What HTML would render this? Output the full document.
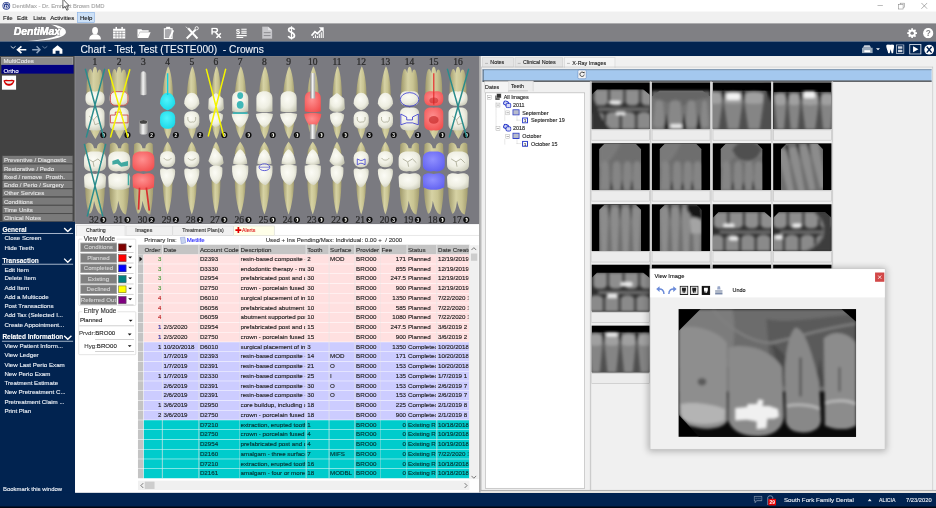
<!DOCTYPE html>
<html><head><meta charset="utf-8">
<style>
html,body{margin:0;padding:0;width:936px;height:508px;overflow:hidden;background:#fff}
#root{position:absolute;left:0;top:0;width:1920px;height:1042px;transform:scale(0.4875);transform-origin:0 0;font-family:"Liberation Sans",sans-serif;font-size:12px;overflow:hidden;background:#f0f0f0}
.a{position:absolute}
.t{position:absolute;white-space:pre;line-height:1;-webkit-text-stroke:0.25px currentColor}
</style></head><body><div id="root">


<svg width="0" height="0" style="position:absolute"><defs>
<filter id="bl" x="-5%" y="-5%" width="110%" height="110%"><feGaussianBlur stdDeviation="3"/></filter>
<filter id="blb" x="-5%" y="-5%" width="110%" height="110%"><feGaussianBlur stdDeviation="3.5"/></filter>
<symbol id="xr00" viewBox="0 0 120 96">
<clipPath id="cxr00"><path d="M12 14H106L120 26V96H0V26Z"/></clipPath>
<g clip-path="url(#cxr00)"><rect x="0" y="0" width="120" height="96" fill="#2e2e2e"/><g filter="url(#bl)">
<path d="M6 14H34V40C32 50 8 50 6 40Z" fill="#8e8e8e"/>
<path d="M38 14H66V40C64 50 40 50 38 40Z" fill="#8e8e8e"/>
<path d="M70 14H98V40C96 50 72 50 70 40Z" fill="#8e8e8e"/>
<path d="M102 14H130V40C128 50 104 50 102 40Z" fill="#8e8e8e"/>
<rect x="14" y="52" width="106" height="6" fill="#767676"/>
<path d="M-2 68C0 58 24 58 26 68V96H-2Z" fill="#8a8a8a"/>
<path d="M30 68C32 58 56 58 58 68V96H30Z" fill="#8a8a8a"/>
<path d="M62 68C64 58 88 58 90 68V96H62Z" fill="#8a8a8a"/>
<path d="M94 68C96 58 120 58 122 68V96H94Z" fill="#8a8a8a"/>
<rect x="36" y="38" width="24" height="7" rx="3" fill="#f0f0f0"/>
<rect x="50" y="60" width="20" height="7" rx="3" fill="#f0f0f0"/>
<path d="M0 26C14 40 12 70 40 96H0Z" fill="#303030"/>
</g></g>
</symbol>
<symbol id="xr01" viewBox="0 0 120 96">
<path d="M16 17H104L120 29V96H0V29Z" fill="#737373"/><g filter="url(#bl)">
<path d="M0 31C30 37 40 47 56 51C70 45 90 33 120 31V17H0Z" fill="#666"/>
<path d="M7 41C11 35 19 35 23 41L27 88C21 95 9 95 3 88Z" fill="#888"/>
<path d="M37 41C41 35 55 35 59 41L63 88C57 95 39 95 33 88Z" fill="#888"/>
<path d="M73 41C77 35 85 35 89 41L93 88C87 95 75 95 69 88Z" fill="#888"/>
<path d="M103 41C107 35 109 35 113 41L117 88C111 95 105 95 99 88Z" fill="#888"/>
<path d="M25 96L30 62L35 96Z" fill="#121212"/>
<path d="M61 96L66 62L71 96Z" fill="#121212"/>
<path d="M91 96L96 62L101 96Z" fill="#121212"/>
<rect x="38" y="86" width="24" height="8" rx="2" fill="#eee"/>
</g>
</symbol>
<symbol id="xr02" viewBox="0 0 120 96">
<rect x="0" y="17" width="120" height="79" fill="#4e4e4e"/><g filter="url(#bl)">
<path d="M-20 25C-20 17 21 17 21 25L20 43L12.0 96H-11.0L-19 43Z" fill="#858585"/>
<path d="M-19 25C-19 18 20 18 20 25L19 41C8.7 45 -7.700000000000001 45 -18 41Z" fill="#a0a0a0"/>
<path d="M22 25C22 17 62 17 62 25L61 43L53.2 96H30.8L23 43Z" fill="#858585"/>
<path d="M23 25C23 18 61 18 61 25L60 41C50.0 45 34.0 45 24 41Z" fill="#a0a0a0"/>
<path d="M64 25C64 17 105 17 105 25L104 43L96.0 96H73.0L65 43Z" fill="#858585"/>
<path d="M65 25C65 18 104 18 104 25L103 41C92.7 45 76.3 45 66 41Z" fill="#a0a0a0"/>
<path d="M16.5 17H26.5L21.5 47Z" fill="#141414"/>
<path d="M58.0 17H68.0L63.0 47Z" fill="#141414"/>
<rect x="28" y="22" width="28" height="14" rx="3" fill="#f2f2f2"/>
<path d="M104 0H120V42Z" fill="#000"/>
</g>
</symbol>
<symbol id="xr03" viewBox="0 0 120 96">
<rect x="0" y="20" width="120" height="76" fill="#4e4e4e"/><g filter="url(#bl)">
<path d="M2 28C2 20 28 20 28 28L27 46L22.3 96H7.7L3 46Z" fill="#858585"/>
<path d="M3 28C3 21 27 21 27 28L26 44C20.2 48 9.8 48 4 44Z" fill="#a0a0a0"/>
<path d="M30 28C30 20 56 20 56 28L55 46L50.3 96H35.7L31 46Z" fill="#858585"/>
<path d="M31 28C31 21 55 21 55 28L54 44C48.2 48 37.8 48 32 44Z" fill="#a0a0a0"/>
<path d="M58 28C58 20 94 20 94 28L93 46L86.1 96H65.9L59 46Z" fill="#858585"/>
<path d="M59 28C59 21 93 21 93 28L92 44C83.2 48 68.8 48 60 44Z" fill="#a0a0a0"/>
<path d="M96 28C96 20 124 20 124 28L123 46L117.8 96H102.2L97 46Z" fill="#858585"/>
<path d="M97 28C97 21 123 21 123 28L122 44C115.6 48 104.4 48 98 44Z" fill="#a0a0a0"/>
<path d="M24.0 20H34.0L29.0 50Z" fill="#141414"/>
<path d="M52.0 20H62.0L57.0 50Z" fill="#141414"/>
<path d="M90.0 20H100.0L95.0 50Z" fill="#141414"/>
<rect x="62" y="18" width="24" height="14" rx="3" fill="#f2f2f2"/>
</g>
</symbol>
<symbol id="xr10" viewBox="0 0 120 96">
<clipPath id="cxr10"><path d="M28 0H90L102 12V96H16V12Z"/></clipPath><g clip-path="url(#cxr10)"><rect x="0" y="0" width="120" height="96" fill="#6e6e6e"/><g filter="url(#bl)">
<path d="M16 0H60C50 20 40 40 16 50Z" fill="#7a7a7a"/>
<path d="M18 96L20 44C24 34 32 34 36 44L38 96Z" fill="#858585"/>
<path d="M42 96L44 44C48 34 56 34 60 44L62 96Z" fill="#858585"/>
<path d="M64 96L66 44C70 34 78 34 82 44L84 96Z" fill="#858585"/>
<path d="M84 96L86 44C90 34 98 34 102 44L104 96Z" fill="#858585"/>
<path d="M38 96L41 74L44 96Z" fill="#0e0e0e"/>
<path d="M60 96L63 74L66 96Z" fill="#0e0e0e"/>
<path d="M80 96L83 74L86 96Z" fill="#0e0e0e"/>
</g></g>
</symbol>
<symbol id="xr11" viewBox="0 0 120 96">
<clipPath id="cxr11"><path d="M28 0H90L102 12V96H16V12Z"/></clipPath><g clip-path="url(#cxr11)"><rect x="0" y="0" width="120" height="96" fill="#6e6e6e"/><g filter="url(#bl)">
<path d="M16 0H60C50 20 40 40 16 50Z" fill="#7a7a7a"/>
<path d="M18 96L20 44C24 34 32 34 36 44L38 96Z" fill="#858585"/>
<path d="M42 96L44 44C48 34 56 34 60 44L62 96Z" fill="#858585"/>
<path d="M64 96L66 44C70 34 78 34 82 44L84 96Z" fill="#858585"/>
<path d="M84 96L86 44C90 34 98 34 102 44L104 96Z" fill="#858585"/>
<path d="M38 96L41 74L44 96Z" fill="#0e0e0e"/>
<path d="M60 96L63 74L66 96Z" fill="#0e0e0e"/>
<path d="M80 96L83 74L86 96Z" fill="#0e0e0e"/>
</g></g>
</symbol>
<symbol id="xr12" viewBox="0 0 120 96">
<clipPath id="cxr12"><path d="M28 0H90L102 12V96H16V12Z"/></clipPath><g clip-path="url(#cxr12)"><rect x="0" y="0" width="120" height="96" fill="#6e6e6e"/><g filter="url(#bl)">
<path d="M16 0H60C50 20 40 40 16 50Z" fill="#7a7a7a"/>
<ellipse cx="70" cy="18" rx="30" ry="22" fill="#505050"/><path d="M40 18C50 45 90 45 100 18" stroke="#8a8a8a" stroke-width="3" fill="none"/>
<path d="M18 96L20 44C24 34 32 34 36 44L38 96Z" fill="#858585"/>
<path d="M42 96L44 44C48 34 56 34 60 44L62 96Z" fill="#858585"/>
<path d="M64 96L66 44C70 34 78 34 82 44L84 96Z" fill="#858585"/>
<path d="M84 96L86 44C90 34 98 34 102 44L104 96Z" fill="#858585"/>
<path d="M38 96L41 74L44 96Z" fill="#0e0e0e"/>
<path d="M60 96L63 74L66 96Z" fill="#0e0e0e"/>
<path d="M80 96L83 74L86 96Z" fill="#0e0e0e"/>
</g></g>
</symbol>
<symbol id="xr13" viewBox="0 0 120 96">
<clipPath id="cxr13"><path d="M28 0H90L102 12V96H16V12Z"/></clipPath><g clip-path="url(#cxr13)"><rect x="0" y="0" width="120" height="96" fill="#6e6e6e"/><g filter="url(#bl)">
<g transform="rotate(-12 58 48)">
<path d="M16 12C16 2 36 2 36 12L32 100H20Z" fill="#8c8c8c"/>
<path d="M38 12C38 2 58 2 58 12L54 100H42Z" fill="#8c8c8c"/>
<path d="M60 12C60 2 80 2 80 12L76 100H64Z" fill="#8c8c8c"/>
<path d="M82 12C82 2 102 2 102 12L98 100H86Z" fill="#8c8c8c"/>
<path d="M34 0L40 0L37 36Z" fill="#101010"/>
<path d="M56 0L62 0L59 36Z" fill="#101010"/>
<path d="M78 0L84 0L81 36Z" fill="#101010"/>
</g>
</g></g>
</symbol>
<symbol id="xr20" viewBox="0 0 120 96">
<clipPath id="cxr20"><path d="M28 0H90L102 12V96H16V12Z"/></clipPath><g clip-path="url(#cxr20)"><rect x="0" y="0" width="120" height="96" fill="#6e6e6e"/><g filter="url(#bl)">
<g transform="rotate(0 58 48)">
<path d="M16 12C16 2 36 2 36 12L32 100H20Z" fill="#8c8c8c"/>
<path d="M38 12C38 2 58 2 58 12L54 100H42Z" fill="#8c8c8c"/>
<path d="M60 12C60 2 80 2 80 12L76 100H64Z" fill="#8c8c8c"/>
<path d="M82 12C82 2 102 2 102 12L98 100H86Z" fill="#8c8c8c"/>
<path d="M34 0L40 0L37 36Z" fill="#101010"/>
<path d="M56 0L62 0L59 36Z" fill="#101010"/>
<path d="M78 0L84 0L81 36Z" fill="#101010"/>
</g>
</g></g>
</symbol>
<symbol id="xr21" viewBox="0 0 120 96">
<clipPath id="cxr21"><path d="M28 0H90L102 12V96H16V12Z"/></clipPath><g clip-path="url(#cxr21)"><rect x="0" y="0" width="120" height="96" fill="#6e6e6e"/><g filter="url(#bl)">
<g transform="rotate(0 58 48)">
<path d="M16 12C16 2 36 2 36 12L32 100H20Z" fill="#8c8c8c"/>
<path d="M38 12C38 2 58 2 58 12L54 100H42Z" fill="#8c8c8c"/>
<path d="M60 12C60 2 80 2 80 12L76 100H64Z" fill="#8c8c8c"/>
<path d="M82 12C82 2 102 2 102 12L98 100H86Z" fill="#8c8c8c"/>
<path d="M34 0L40 0L37 36Z" fill="#101010"/>
<path d="M56 0L62 0L59 36Z" fill="#101010"/>
<path d="M78 0L84 0L81 36Z" fill="#101010"/>
</g>
<path d="M72 0H102V36C92 34 82 26 72 12Z" fill="#141414"/><path d="M78 30C86 26 96 28 102 34V60H80Z" fill="#a4a4a4"/>
</g></g>
</symbol>
<symbol id="xr22" viewBox="0 0 120 96">
<clipPath id="cxr22"><path d="M12 16H106L120 28V96H0V28Z"/></clipPath>
<g clip-path="url(#cxr22)"><rect x="0" y="0" width="120" height="96" fill="#2e2e2e"/><g filter="url(#bl)">
<path d="M2 16H30V42C28 52 4 52 2 42Z" fill="#8e8e8e"/>
<path d="M34 16H62V42C60 52 36 52 34 42Z" fill="#8e8e8e"/>
<path d="M66 16H94V42C92 52 68 52 66 42Z" fill="#8e8e8e"/>
<path d="M98 16H126V42C124 52 100 52 98 42Z" fill="#8e8e8e"/>
<rect x="14" y="54" width="106" height="6" fill="#767676"/>
<path d="M-6 70C-4 60 20 60 22 70V96H-6Z" fill="#8a8a8a"/>
<path d="M26 70C28 60 52 60 54 70V96H26Z" fill="#8a8a8a"/>
<path d="M58 70C60 60 84 60 86 70V96H58Z" fill="#8a8a8a"/>
<path d="M90 70C92 60 116 60 118 70V96H90Z" fill="#8a8a8a"/>
<rect x="22" y="40" width="22" height="8" rx="3" fill="#f0f0f0"/>
<rect x="34" y="66" width="18" height="8" rx="3" fill="#f0f0f0"/>
</g></g>
</symbol>
<symbol id="xr23" viewBox="0 0 120 96">
<clipPath id="cxr23"><path d="M12 16H106L120 28V96H0V28Z"/></clipPath>
<g clip-path="url(#cxr23)"><rect x="0" y="0" width="120" height="96" fill="#2e2e2e"/><g filter="url(#bl)">
<path d="M0 16H28V42C26 52 2 52 0 42Z" fill="#8e8e8e"/>
<path d="M32 16H60V42C58 52 34 52 32 42Z" fill="#8e8e8e"/>
<path d="M64 16H92V42C90 52 66 52 64 42Z" fill="#8e8e8e"/>
<path d="M96 16H124V42C122 52 98 52 96 42Z" fill="#8e8e8e"/>
<rect x="14" y="54" width="106" height="6" fill="#767676"/>
<path d="M-8 70C-6 60 18 60 20 70V96H-8Z" fill="#8a8a8a"/>
<path d="M24 70C26 60 50 60 52 70V96H24Z" fill="#8a8a8a"/>
<path d="M56 70C58 60 82 60 84 70V96H56Z" fill="#8a8a8a"/>
<path d="M88 70C90 60 114 60 116 70V96H88Z" fill="#8a8a8a"/>
<rect x="40" y="40" width="18" height="8" rx="3" fill="#f0f0f0"/>
<rect x="4" y="62" width="16" height="10" rx="3" fill="#f0f0f0"/>
<path d="M84 16C116 40 112 80 68 96H120V16Z" fill="#3c3c3c"/><path d="M86 20C112 40 108 76 70 94" stroke="#707070" stroke-width="3" fill="none"/>
</g></g>
</symbol>
<symbol id="xr30" viewBox="0 0 120 96">
<clipPath id="cxr30"><path d="M12 16H106L120 28V96H0V28Z"/></clipPath>
<g clip-path="url(#cxr30)"><rect x="0" y="0" width="120" height="96" fill="#2e2e2e"/><g filter="url(#bl)">
<path d="M4 16H32V42C30 52 6 52 4 42Z" fill="#8e8e8e"/>
<path d="M36 16H64V42C62 52 38 52 36 42Z" fill="#8e8e8e"/>
<path d="M68 16H96V42C94 52 70 52 68 42Z" fill="#8e8e8e"/>
<path d="M100 16H128V42C126 52 102 52 100 42Z" fill="#8e8e8e"/>
<rect x="14" y="54" width="106" height="6" fill="#767676"/>
<path d="M-4 70C-2 60 22 60 24 70V96H-4Z" fill="#8a8a8a"/>
<path d="M28 70C30 60 54 60 56 70V96H28Z" fill="#8a8a8a"/>
<path d="M60 70C62 60 86 60 88 70V96H60Z" fill="#8a8a8a"/>
<path d="M92 70C94 60 118 60 120 70V96H92Z" fill="#8a8a8a"/>
<rect x="60" y="36" width="24" height="8" rx="3" fill="#f0f0f0"/>
<rect x="32" y="60" width="22" height="8" rx="3" fill="#f0f0f0"/>
</g></g>
</symbol>
<symbol id="xr31" viewBox="0 0 120 96">
<rect x="0" y="14" width="120" height="82" fill="#4e4e4e"/><g filter="url(#bl)">
<path d="M-6 22C-6 14 24 14 24 22L23 40L17.4 96H0.6L-5 40Z" fill="#858585"/>
<path d="M-5 22C-5 15 23 15 23 22L22 38C15.0 42 3.0 42 -4 38Z" fill="#a0a0a0"/>
<path d="M26 22C26 14 58 14 58 22L57 40L51.0 96H33.0L27 40Z" fill="#858585"/>
<path d="M27 22C27 15 57 15 57 22L56 38C48.4 42 35.6 42 28 38Z" fill="#a0a0a0"/>
<path d="M60 22C60 14 92 14 92 22L91 40L85.0 96H67.0L61 40Z" fill="#858585"/>
<path d="M61 22C61 15 91 15 91 22L90 38C82.4 42 69.6 42 62 38Z" fill="#a0a0a0"/>
<path d="M94 22C94 14 126 14 126 22L125 40L119.0 96H101.0L95 40Z" fill="#858585"/>
<path d="M95 22C95 15 125 15 125 22L124 38C116.4 42 103.6 42 96 38Z" fill="#a0a0a0"/>
<path d="M20.0 14H30.0L25.0 44Z" fill="#141414"/>
<path d="M54.0 14H64.0L59.0 44Z" fill="#141414"/>
<path d="M88.0 14H98.0L93.0 44Z" fill="#141414"/>
<rect x="32" y="14" width="24" height="8" rx="3" fill="#f2f2f2"/>
</g>
</symbol>
<symbol id="xr32" viewBox="0 0 120 96">
<rect x="0" y="14" width="120" height="82" fill="#4e4e4e"/><g filter="url(#bl)">
<path d="M0 22C0 14 30 14 30 22L29 40L23.4 96H6.6L1 40Z" fill="#858585"/>
<path d="M1 22C1 15 29 15 29 22L28 38C21.0 42 9.0 42 2 38Z" fill="#a0a0a0"/>
<path d="M32 22C32 14 62 14 62 22L61 40L55.4 96H38.6L33 40Z" fill="#858585"/>
<path d="M33 22C33 15 61 15 61 22L60 38C53.0 42 41.0 42 34 38Z" fill="#a0a0a0"/>
<path d="M64 22C64 14 94 14 94 22L93 40L87.4 96H70.6L65 40Z" fill="#858585"/>
<path d="M65 22C65 15 93 15 93 22L92 38C85.0 42 73.0 42 66 38Z" fill="#a0a0a0"/>
<path d="M96 22C96 14 126 14 126 22L125 40L119.4 96H102.6L97 40Z" fill="#858585"/>
<path d="M97 22C97 15 125 15 125 22L124 38C117.0 42 105.0 42 98 38Z" fill="#a0a0a0"/>
<path d="M26.0 14H36.0L31.0 44Z" fill="#141414"/>
<path d="M58.0 14H68.0L63.0 44Z" fill="#141414"/>
<path d="M90.0 14H100.0L95.0 44Z" fill="#141414"/>
</g>
</symbol>
<symbol id="xr33" viewBox="0 0 120 96">
<rect x="0" y="14" width="120" height="82" fill="#4e4e4e"/><g filter="url(#bl)">
<path d="M0 22C0 14 30 14 30 22L29 40L23.4 96H6.6L1 40Z" fill="#858585"/>
<path d="M1 22C1 15 29 15 29 22L28 38C21.0 42 9.0 42 2 38Z" fill="#a0a0a0"/>
<path d="M32 22C32 14 62 14 62 22L61 40L55.4 96H38.6L33 40Z" fill="#858585"/>
<path d="M33 22C33 15 61 15 61 22L60 38C53.0 42 41.0 42 34 38Z" fill="#a0a0a0"/>
<path d="M64 22C64 14 94 14 94 22L93 40L87.4 96H70.6L65 40Z" fill="#858585"/>
<path d="M65 22C65 15 93 15 93 22L92 38C85.0 42 73.0 42 66 38Z" fill="#a0a0a0"/>
<path d="M96 22C96 14 126 14 126 22L125 40L119.4 96H102.6L97 40Z" fill="#858585"/>
<path d="M97 22C97 15 125 15 125 22L124 38C117.0 42 105.0 42 98 38Z" fill="#a0a0a0"/>
<path d="M26.0 14H36.0L31.0 44Z" fill="#141414"/>
<path d="M58.0 14H68.0L63.0 44Z" fill="#141414"/>
<path d="M90.0 14H100.0L95.0 44Z" fill="#141414"/>
</g>
</symbol>
<symbol id="xr40" viewBox="0 0 120 96">
<rect x="0" y="14" width="120" height="82" fill="#4e4e4e"/><g filter="url(#bl)">
<path d="M-6 22C-6 14 24 14 24 22L23 40L17.4 96H0.6L-5 40Z" fill="#858585"/>
<path d="M-5 22C-5 15 23 15 23 22L22 38C15.0 42 3.0 42 -4 38Z" fill="#a0a0a0"/>
<path d="M26 22C26 14 58 14 58 22L57 40L51.0 96H33.0L27 40Z" fill="#858585"/>
<path d="M27 22C27 15 57 15 57 22L56 38C48.4 42 35.6 42 28 38Z" fill="#a0a0a0"/>
<path d="M60 22C60 14 92 14 92 22L91 40L85.0 96H67.0L61 40Z" fill="#858585"/>
<path d="M61 22C61 15 91 15 91 22L90 38C82.4 42 69.6 42 62 38Z" fill="#a0a0a0"/>
<path d="M94 22C94 14 126 14 126 22L125 40L119.0 96H101.0L95 40Z" fill="#858585"/>
<path d="M95 22C95 15 125 15 125 22L124 38C116.4 42 103.6 42 96 38Z" fill="#a0a0a0"/>
<path d="M20.0 14H30.0L25.0 44Z" fill="#141414"/>
<path d="M54.0 14H64.0L59.0 44Z" fill="#141414"/>
<path d="M88.0 14H98.0L93.0 44Z" fill="#141414"/>
<rect x="30" y="14" width="24" height="8" rx="3" fill="#f2f2f2"/>
</g>
</symbol>
<symbol id="xbig" viewBox="0 0 364 264"><clipPath id="cbig"><path d="M45 0H334L364 26V264H42L0 218V45Z"/></clipPath>
<g clip-path="url(#cbig)"><rect width="364" height="264" fill="#0a0a0a"/><g filter="url(#blb)">
<rect x="0" y="0" width="364" height="170" fill="#6c6c6c"/><path d="M0 0H110C120 40 112 90 104 120L0 120Z" fill="#7c7c7c"/>
<path d="M180 20C220 30 260 20 364 10V150H190Z" fill="#5a5a5a"/>
<path d="M190 70C230 100 250 140 260 160L215 160Z" fill="#4a4a4a"/><path d="M290 100L300 160H280Z" fill="#4a4a4a"/>
<path d="M70 0C100 40 150 70 190 70C240 60 290 40 364 30" stroke="#808080" stroke-width="5" fill="none"/>
<path d="M0 40C20 30 80 40 99 70L100 230C90 250 50 250 20 240L0 218Z" fill="#8e8e8e"/>
<path d="M4 196C30 190 70 196 95 206L94 230C70 240 30 240 6 226Z" fill="#b4b4b4"/>
<ellipse cx="48" cy="150" rx="9" ry="8" fill="#5a5a5a"/>
<path d="M102 80C130 70 190 80 212 120L216 220C214 250 190 262 160 262C130 262 108 250 102 230Z" fill="#8a8a8a"/>
<path d="M218 150C216 100 226 50 240 38C256 40 272 80 288 150L292 230C290 250 270 256 250 254C230 254 220 240 220 230Z" fill="#888"/>
<path d="M222 200C240 196 270 196 290 206" stroke="#b8b8b8" stroke-width="5" fill="none"/>
<path d="M250 100V180" stroke="#4a4a4a" stroke-width="4"/>
<path d="M298 60C320 40 350 50 364 70V240C350 250 320 250 300 240Z" fill="#8c8c8c"/>
<path d="M300 194C320 186 350 188 364 196" stroke="#bcbcbc" stroke-width="5" fill="none"/>
<path d="M330 120V170" stroke="#555" stroke-width="4"/>
</g><g filter="url(#bl)"><path d="M116 204L140 202L142 196L160 196L164 186L174 188L172 200L186 200L204 206L206 222L196 226L182 226L180 246L160 248L160 232L140 228L116 230Z" fill="#f0f0f0"/></g></g></symbol>
</defs></svg>

<!-- title bar -->
<div class="a" style="left:0;top:0;width:1920px;height:24px;background:#fff"></div>
<svg class="a" style="left:4px;top:3px" width="18" height="18" viewBox="0 0 18 18"><circle cx="9" cy="9" r="8" fill="#2a3f8f"/><circle cx="9" cy="9" r="6.3" fill="#fff"/><circle cx="9" cy="9" r="5.2" fill="#2a3f8f"/><text x="9" y="13" font-family="Liberation Serif" font-style="italic" font-weight="bold" font-size="10" fill="#fff" text-anchor="middle">D</text></svg>
<div class="t" style="left:25px;top:7px;font-size:12px;color:#a4a4a4">DentiMax - Dr. Emmett Brown DMD</div>
<div class="a" style="left:1800px;top:11px;width:11px;height:1px;background:#777"></div>
<div class="a" style="left:1846px;top:6px;width:8px;height:8px;border:1px solid #777"></div>
<div class="a" style="left:1843px;top:9px;width:8px;height:8px;border:1px solid #777;background:#fff"></div>
<svg class="a" style="left:1889px;top:5px" width="14" height="14"><path d="M1 1L13 13M13 1L1 13" stroke="#777" stroke-width="1.2"/></svg>
<!-- menu bar -->
<div class="a" style="left:0;top:24px;width:1920px;height:24px;background:#f0f0f0"></div>
<div class="a" style="left:158px;top:25px;width:34px;height:20px;background:#cce0f6;border:1.5px solid #7aa6e0"></div>
<div class="t" style="left:6px;top:30px;font-size:12.5px;color:#1a1a1a">File</div>
<div class="t" style="left:35px;top:30px;font-size:12.5px;color:#1a1a1a">Edit</div>
<div class="t" style="left:68px;top:30px;font-size:12.5px;color:#1a1a1a">Lists</div>
<div class="t" style="left:103px;top:30px;font-size:12.5px;color:#1a1a1a">Activities</div>
<div class="t" style="left:164px;top:30px;font-size:12.5px;color:#1a1a1a">Help</div>
<!-- toolbar -->
<div class="a" style="left:0;top:48px;width:1920px;height:37px;background:#808084"></div>
<svg class="a" style="left:20px;top:50px" width="120" height="34" viewBox="0 0 120 34">
<path d="M30 33.5 C 70 35, 112 29, 115 17 C 117 8, 102 2, 84 0.5 C 97 5, 104 10, 102 17 C 98 27, 70 32, 30 33.5 Z" fill="#fff"/>
<text x="8" y="22" font-family="Liberation Sans" font-style="italic" font-weight="bold" font-size="21.5" fill="#fff" stroke="#808084" stroke-width="2.4" paint-order="stroke">DentiMax</text><text x="8" y="22" font-family="Liberation Sans" font-style="italic" font-weight="bold" font-size="21.5" fill="#fff" stroke="#fff" stroke-width="0.5">DentiMax</text>
</svg>
<!-- person -->
<svg class="a" style="left:182px;top:55px" width="26" height="27" viewBox="0 0 26 27"><ellipse cx="13" cy="8" rx="6" ry="7.5" fill="#fff"/><path d="M1 26 C1 18 6 16 10 15 L16 15 C20 16 25 18 25 26 Z" fill="#fff"/></svg>
<!-- calendar -->
<svg class="a" style="left:231px;top:55px" width="27" height="25" viewBox="0 0 27 25"><rect x="1" y="4" width="25" height="20" fill="#fff"/><rect x="6" y="0" width="3" height="6" fill="#fff"/><rect x="18" y="0" width="3" height="6" fill="#fff"/><g stroke="#808084" stroke-width="1.3"><path d="M1 9H26M1 14H26M1 19H26M7 9V24M13 9V24M19 9V24"/></g></svg>
<!-- folder -->
<svg class="a" style="left:281px;top:57px" width="29" height="22" viewBox="0 0 29 22"><path d="M1 3H9L11 5H24V8H6L1 20Z" fill="#fff"/><path d="M6 9H28L23 21H1Z" fill="#fff"/></svg>
<!-- clipboard -->
<svg class="a" style="left:335px;top:54px" width="22" height="27" viewBox="0 0 22 27"><path d="M2 5H7V2H13V5H18V25H2Z" fill="#a8a8ac" stroke="#fff" stroke-width="2.2"/><rect x="7" y="1.5" width="6" height="4" fill="#fff"/><path d="M12 22L19 7L22 9L15 24L12 25Z" fill="#fff"/></svg>
<!-- tools -->
<svg class="a" style="left:379px;top:53px" width="30" height="29" viewBox="0 0 30 29"><path d="M4 26L22 8" stroke="#fff" stroke-width="4"/><path d="M7 5L26 26" stroke="#fff" stroke-width="4"/><path d="M2 2L7 6" stroke="#fff" stroke-width="1.4"/><circle cx="24.5" cy="5" r="3.3" fill="none" stroke="#fff" stroke-width="1.8"/></svg>
<!-- Rx -->
<svg class="a" style="left:433px;top:57px" width="22" height="22" viewBox="0 0 22 22"><path d="M2 14V1H8C12 1 13 3.5 13 5C13 7 11.5 8.5 9 8.8L12 13" stroke="#fff" stroke-width="3" fill="none" stroke-linejoin="round"/><path d="M2 8.5H8" stroke="#fff" stroke-width="2.6"/><path d="M11 11L20 21M20 11L11 21" stroke="#fff" stroke-width="3"/></svg>
<!-- list $ -->
<svg class="a" style="left:484px;top:56px" width="23" height="24" viewBox="0 0 23 24"><text x="0" y="13" font-family="Liberation Sans" font-weight="bold" font-size="15" fill="#fff">$</text><path d="M11 4H22M11 8H22M11 12H22" stroke="#fff" stroke-width="2.2"/><path d="M1 17H22M1 21H15" stroke="#fff" stroke-width="2.4"/></svg>
<!-- doc -->
<svg class="a" style="left:537px;top:54px" width="22" height="26" viewBox="0 0 22 26"><path d="M1 1H13L21 8V25H1Z" fill="#c8c8cc" stroke="#b8b8bc" stroke-width="1"/><path d="M13 1V8H21" fill="#e4e4e8"/><path d="M4 13H18M4 19H18" stroke="#8a8a8e" stroke-width="2"/></svg>
<!-- $ -->
<svg class="a" style="left:588px;top:53px" width="20" height="30" viewBox="0 0 20 30"><path d="M16 8C15 5 12.5 4 10 4C6.5 4 4 5.5 4 8.5C4 14 16 12.5 16 20C16 23.5 13 25 10 25C7 25 4.5 24 3.5 21" stroke="#fff" stroke-width="3.6" fill="none"/><path d="M10 1V28" stroke="#fff" stroke-width="2.6"/></svg>
<!-- chart -->
<svg class="a" style="left:637px;top:55px" width="28" height="24" viewBox="0 0 28 24"><path d="M2 18L9 10L14 14L23 5" stroke="#fff" stroke-width="3.4" fill="none"/><path d="M17 1H27V11Z" fill="#fff"/><path d="M6 23V20M10 23V16M14 23V19M18 23V14M22 23V11M26 23V9" stroke="#fff" stroke-width="2.2"/></svg>
<!-- gear ? -->
<svg class="a" style="left:1860px;top:57px" width="22" height="22" viewBox="0 0 22 22"><g fill="#fff"><circle cx="11" cy="11" r="7.5"/><g stroke="#fff" stroke-width="3.5"><path d="M11 1V21M1 11H21M4 4L18 18M18 4L4 18"/></g></g><circle cx="11" cy="11" r="3.5" fill="#808084"/></svg>
<svg class="a" style="left:1893px;top:57px" width="22" height="22" viewBox="0 0 22 22"><circle cx="11" cy="11" r="10.5" fill="#fff"/><text x="11" y="17.5" font-family="Liberation Sans" font-weight="bold" font-size="17" fill="#808084" text-anchor="middle">?</text></svg>
<!-- navy header -->
<div class="a" style="left:0;top:85px;width:1920px;height:30px;background:#012350"></div>
<svg class="a" style="left:20px;top:92px" width="110" height="20" viewBox="0 0 110 20">
<path d="M2 3L7 7L12 3" stroke="#fff" stroke-width="1.6" fill="none"/>
<path d="M16 10H34M24 3L16 10L24 17" stroke="#fff" stroke-width="3.4" fill="none"/>
<path d="M46 10H62M55 3L62 10L55 17" stroke="#8da2bc" stroke-width="3" fill="none"/>
<path d="M67 3L72 7L77 3" stroke="#8da2bc" stroke-width="1.4" fill="none"/>
<path d="M88 9L98 1L108 9V18H102V12H94V18H88Z" fill="#fff"/>
</svg>
<div class="t" style="left:165px;top:90px;font-size:21px;color:#eef2f8">Chart - Test, Test (TESTE000)  - Crowns</div>
<!-- right icons in navy -->
<svg class="a" style="left:1768px;top:92px" width="40" height="18" viewBox="0 0 40 18"><path d="M5 1H16L19 6H2Z" fill="#c8d0da"/><rect x="0" y="6" width="22" height="11" fill="#9aaabb"/><rect x="5" y="11" width="12" height="4" fill="#fff"/><path d="M29 7H37L33 11Z" fill="#fff"/></svg>
<svg class="a" style="left:1817px;top:91px" width="40" height="20" viewBox="0 0 40 20"><path d="M1 3C1 0 5 0 9 1C13 0 17 0 17 3C17 8 16 10 15 18L12 18L10 10L8 18L5 18C3 10 1 8 1 3Z" fill="#fff"/><rect x="22" y="1" width="15" height="18" fill="none" stroke="#cfd6e0" stroke-width="1.5"/><rect x="25" y="4" width="9" height="5" fill="#cfd6e0"/><rect x="25" y="11" width="9" height="5" fill="#cfd6e0"/></svg>
<svg class="a" style="left:1865px;top:90px" width="26" height="22" viewBox="0 0 26 22"><rect x="1" y="1" width="23" height="20" fill="none" stroke="#dfe5ee" stroke-width="2"/><path d="M8 5L19 11L8 17Z" fill="#fff"/></svg>
<svg class="a" style="left:1895px;top:91px" width="22" height="22" viewBox="0 0 22 22"><circle cx="11" cy="11" r="10" fill="#fff"/><path d="M6 5L16 17M16 5L6 17" stroke="#012350" stroke-width="3"/></svg>


<!-- cursor --><svg class="a" style="left:126px;top:-3px;z-index:50" width="18" height="26" viewBox="0 0 18 26"><path d="M3 1V20L7.5 16L11 24L14 22.5L10.5 15H16Z" fill="#fff" stroke="#333" stroke-width="1.6" stroke-linejoin="round"/></svg>

<!-- left panel -->
<div class="a" style="left:0;top:115px;width:152px;height:340px;background:#424242"></div>
<div class="a" style="left:152px;top:115px;width:2px;height:345px;background:#555"></div>
<div class="a" style="left:3px;top:117px;width:145px;height:14px;background:#8a8a8a;border:1px solid #b0b0b0"></div>
<div class="t" style="left:7px;top:120px;font-size:12.5px;color:#e8e8e8">MultiCodes</div>
<div class="a" style="left:3px;top:133px;width:148px;height:18px;background:#000080"></div>
<div class="t" style="left:7px;top:139px;font-size:12.5px;color:#fff">Ortho</div>
<div class="a" style="left:4px;top:155px;width:29px;height:29px;background:#fff"></div>
<svg class="a" style="left:6px;top:161px" width="25" height="16" viewBox="0 0 25 16"><path d="M1 4C6 1 10 3 12.5 3C15 3 19 1 24 4C22 12 17 15 12.5 15C8 15 3 12 1 4Z" fill="#d40000"/><path d="M4 5.5C8 6 17 6 21 5.5C19 9.5 16 11 12.5 11C9 11 6 9.5 4 5.5Z" fill="#e8f4f0"/></svg>
<div class="a" style="left:4px;top:319px;width:144px;height:15px;background:#7a7a7a;border:1px solid #3a3a3a"></div>
<div class="t" style="left:8px;top:322.5px;font-size:12.5px;color:#e4e4e4">Preventive / Diagnostic</div>
<div class="a" style="left:4px;top:336px;width:144px;height:15px;background:#7a7a7a;border:1px solid #3a3a3a"></div>
<div class="t" style="left:8px;top:339.5px;font-size:12.5px;color:#e4e4e4">Restorative / Pedo</div>
<div class="a" style="left:4px;top:353px;width:144px;height:15px;background:#7a7a7a;border:1px solid #3a3a3a"></div>
<div class="t" style="left:8px;top:356.5px;font-size:12.5px;color:#e4e4e4">fixed / remove  Prosth.</div>
<div class="a" style="left:4px;top:370px;width:144px;height:15px;background:#7a7a7a;border:1px solid #3a3a3a"></div>
<div class="t" style="left:8px;top:373.5px;font-size:12.5px;color:#e4e4e4">Endo / Perio / Surgery</div>
<div class="a" style="left:4px;top:387px;width:144px;height:15px;background:#7a7a7a;border:1px solid #3a3a3a"></div>
<div class="t" style="left:8px;top:390.5px;font-size:12.5px;color:#e4e4e4">Other Services</div>
<div class="a" style="left:4px;top:404px;width:144px;height:15px;background:#7a7a7a;border:1px solid #3a3a3a"></div>
<div class="t" style="left:8px;top:407.5px;font-size:12.5px;color:#e4e4e4">Conditions</div>
<div class="a" style="left:4px;top:421px;width:144px;height:15px;background:#7a7a7a;border:1px solid #3a3a3a"></div>
<div class="t" style="left:8px;top:424.5px;font-size:12.5px;color:#e4e4e4">Time Units</div>
<div class="a" style="left:4px;top:438px;width:144px;height:15px;background:#7a7a7a;border:1px solid #3a3a3a"></div>
<div class="t" style="left:8px;top:441.5px;font-size:12.5px;color:#e4e4e4">Clinical Notes</div>
<div class="a" style="left:0;top:455px;width:154px;height:587px;background:#012350"></div>
<div class="t" style="left:5px;top:464.7px;font-size:13.3px;font-weight:bold;color:#fff">General</div>
<div class="a" style="left:4px;top:478.2px;width:146px;height:2px;background:#a8b8cc"></div>
<svg class="a" style="left:130px;top:466.2px" width="18" height="11" viewBox="0 0 18 11"><path d="M1.5 1.5L9 9L16.5 1.5" stroke="#fff" stroke-width="2.8" fill="none"/></svg>
<div class="t" style="left:5px;top:527.5px;font-size:13.3px;font-weight:bold;color:#fff">Transaction</div>
<div class="a" style="left:4px;top:541.0px;width:146px;height:2px;background:#a8b8cc"></div>
<svg class="a" style="left:130px;top:529.0px" width="18" height="11" viewBox="0 0 18 11"><path d="M1.5 1.5L9 9L16.5 1.5" stroke="#fff" stroke-width="2.8" fill="none"/></svg>
<div class="t" style="left:5px;top:685.0px;font-size:13.3px;font-weight:bold;color:#fff">Related Information</div>
<div class="a" style="left:4px;top:698.5px;width:146px;height:2px;background:#a8b8cc"></div>
<svg class="a" style="left:130px;top:686.5px" width="18" height="11" viewBox="0 0 18 11"><path d="M1.5 1.5L9 9L16.5 1.5" stroke="#fff" stroke-width="2.8" fill="none"/></svg>
<div class="t" style="left:9px;top:483.1px;font-size:12.7px;color:#eef2f8">Close Screen</div>
<div class="t" style="left:9px;top:502.2px;font-size:12.7px;color:#eef2f8">Hide Teeth</div>
<div class="t" style="left:9px;top:546.5px;font-size:12.7px;color:#eef2f8">Edit Item</div>
<div class="t" style="left:9px;top:565.2px;font-size:12.7px;color:#eef2f8">Delete Item</div>
<div class="t" style="left:9px;top:583.9px;font-size:12.7px;color:#eef2f8">Add Item</div>
<div class="t" style="left:9px;top:602.5px;font-size:12.7px;color:#eef2f8">Add a Multicode</div>
<div class="t" style="left:9px;top:621.5px;font-size:12.7px;color:#eef2f8">Post Transactions</div>
<div class="t" style="left:9px;top:640.9px;font-size:12.7px;color:#eef2f8">Add Tax (Selected I...</div>
<div class="t" style="left:9px;top:660.2px;font-size:12.7px;color:#eef2f8">Create Appointment...</div>
<div class="t" style="left:9px;top:703.7px;font-size:12.7px;color:#eef2f8">View Patient Inform...</div>
<div class="t" style="left:9px;top:722.8px;font-size:12.7px;color:#eef2f8">View Ledger</div>
<div class="t" style="left:9px;top:741.8px;font-size:12.7px;color:#eef2f8">View Last Perio Exam</div>
<div class="t" style="left:9px;top:760.7px;font-size:12.7px;color:#eef2f8">New Perio Exam</div>
<div class="t" style="left:9px;top:780.0px;font-size:12.7px;color:#eef2f8">Treatment Estimate</div>
<div class="t" style="left:9px;top:798.8px;font-size:12.7px;color:#eef2f8">New Pretreatment C...</div>
<div class="t" style="left:9px;top:817.9px;font-size:12.7px;color:#eef2f8">Pretreatment Claim ...</div>
<div class="t" style="left:9px;top:837.0px;font-size:12.7px;color:#eef2f8">Print Plan</div>
<div class="t" style="left:6px;top:998px;font-size:12.2px;color:#eef2f8">Bookmark this window</div>


<!-- chart area -->
<div class="a" style="left:154px;top:115px;width:829px;height:345px;background:#7a7a80"></div>
<svg class="a" style="left:0;top:0" width="1000" height="470" viewBox="0 0 1000 470">
<defs>
<linearGradient id="gr" x1="0" x2="1" y1="0" y2="0"><stop offset="0" stop-color="#a09a6c"/><stop offset="0.4" stop-color="#d6d2a4"/><stop offset="0.7" stop-color="#c9c492"/><stop offset="1" stop-color="#a29c6e"/></linearGradient>
<radialGradient id="gc" cx="0.42" cy="0.38" r="0.75"><stop offset="0" stop-color="#fcfcf6"/><stop offset="0.55" stop-color="#eeeee2"/><stop offset="1" stop-color="#c4c4b0"/></radialGradient>
<radialGradient id="gred" cx="0.45" cy="0.4" r="0.75"><stop offset="0" stop-color="#ff9090"/><stop offset="1" stop-color="#f04848"/></radialGradient>
<radialGradient id="gcy" cx="0.45" cy="0.4" r="0.75"><stop offset="0" stop-color="#50f4fc"/><stop offset="1" stop-color="#10d4e4"/></radialGradient>
<radialGradient id="gbl" cx="0.45" cy="0.4" r="0.75"><stop offset="0" stop-color="#9090ff"/><stop offset="1" stop-color="#5a5aee"/></radialGradient>
<linearGradient id="gmet" x1="0" x2="1"><stop offset="0" stop-color="#888"/><stop offset="0.45" stop-color="#f4f4f4"/><stop offset="1" stop-color="#999"/></linearGradient>
</defs>
<path d="M177.9 196 C176.9 175 178.9 150 182.9 143 C185.9 139 188.9 144 189.9 150 C190.9 142 191.9 137 194.9 137 C197.9 137 198.9 142 199.9 150 C200.9 144 203.9 140 206.9 144 C210.9 152 212.9 175 211.9 196 Z" fill="url(#gr)"/>
<path d="M179.9 240 C179.9 262 190.9 278 195.9 285 C199.9 278 210.9 262 210.9 240 Z" fill="url(#gr)"/>
<path d="M175.4 200 C175.4 188 185.1 186 194.9 188 C204.6 186 214.4 188 214.4 200 C215.4 212 210.4 218 194.9 217 C179.4 218 174.4 212 175.4 200Z" fill="url(#gc)"/>
<path d="M175.4 232 C175.4 222 185.1 219 194.9 221 C204.6 219 214.4 222 214.4 232 L214.4 256 C214.4 266 204.6 269 194.9 267 C185.1 269 175.4 266 175.4 256Z" fill="url(#gc)"/>
<path d="M182.9 238 L191.9 246 L198.9 238 M191.9 246 L194.9 256 L204.9 252" stroke="#b4b4a0" stroke-width="2" fill="none"/>
<text x="194.9" y="133" font-family="Liberation Serif" font-size="19.5" fill="#2a2a2a" stroke="#2a2a2a" stroke-width="0.5" text-anchor="middle">1</text>
<circle cx="211.9" cy="277.0" r="6.3" fill="#0c0c0c"/><ellipse cx="212.2" cy="277.0" rx="2.8" ry="4.3" fill="#f0f0e8"/><ellipse cx="210.7" cy="277.3" rx="1.6" ry="3.2" fill="#202020"/>
<path d="M227.5 196 C226.5 175 228.5 150 232.5 143 C235.5 139 238.5 144 239.5 150 C240.5 142 241.5 137 244.5 137 C247.5 137 248.5 142 249.5 150 C250.5 144 253.5 140 256.5 144 C260.5 152 262.5 175 261.5 196 Z" fill="url(#gr)"/>
<path d="M229.5 240 C229.5 262 240.5 278 245.5 285 C249.5 278 260.5 262 260.5 240 Z" fill="url(#gr)"/>
<path d="M225.0 200 C225.0 188 234.8 186 244.5 188 C254.3 186 264.0 188 264.0 200 C265.0 212 260.0 218 244.5 217 C229.0 218 224.0 212 225.0 200Z" fill="url(#gc)"/>
<path d="M225.0 232 C225.0 222 234.8 219 244.5 221 C254.3 219 264.0 222 264.0 232 L264.0 256 C264.0 266 254.3 269 244.5 267 C234.8 269 225.0 266 225.0 256Z" fill="url(#gc)"/>
<rect x="226.5" y="188" width="36" height="28" rx="9" fill="none" stroke="#c83030" stroke-width="1.6"/><path d="M226.5 236H236.5V230H248.5V236H262.5V252H226.5Z" fill="none" stroke="#c83030" stroke-width="1.6"/>
<text x="244.5" y="133" font-family="Liberation Serif" font-size="19.5" fill="#2a2a2a" stroke="#2a2a2a" stroke-width="0.5" text-anchor="middle">2</text>
<circle cx="261.5" cy="277.0" r="6.3" fill="#0c0c0c"/><ellipse cx="261.8" cy="277.0" rx="2.8" ry="4.3" fill="#f0f0e8"/><ellipse cx="260.3" cy="277.3" rx="1.6" ry="3.2" fill="#202020"/>
<path d="M287.2 194 L288.2 152 C289.2 144 299.2 144 300.2 152 L301.2 194 C297.2 196 291.2 196 287.2 194Z" fill="url(#gmet)"/>
<rect x="285.2" y="246" width="18" height="30" rx="5" fill="url(#gmet)"/><ellipse cx="294.2" cy="250" rx="7.5" ry="4" fill="#444"/>
<text x="294.2" y="133" font-family="Liberation Serif" font-size="19.5" fill="#2a2a2a" stroke="#2a2a2a" stroke-width="0.5" text-anchor="middle">3</text>
<circle cx="311.2" cy="277.0" r="6.3" fill="#0c0c0c"/><text x="311.2" y="280.5" font-family="Liberation Sans" font-weight="bold" font-size="10" fill="#eee" text-anchor="middle">2</text>
<path d="M333.8 198 C333.8 175 338.8 150 344.8 136 C349.8 142 354.8 170 354.8 198 Z" fill="url(#gr)"/>
<path d="M333.8 240 C333.8 262 339.8 278 344.8 285 C348.8 278 354.8 262 354.8 240 Z" fill="url(#gr)"/>
<path d="M328.3 212 C328.3 196 337.8 190 343.8 190 C349.8 190 359.3 196 359.3 212 C357.3 220 347.8 226 343.8 226 C339.8 226 330.3 220 328.3 212Z" fill="url(#gcy)"/>
<rect x="328.3" y="228" width="31" height="36" rx="13" fill="url(#gcy)"/>
<path d="M343.8 150 V195" stroke="#10d0e0" stroke-width="3"/>
<text x="343.8" y="133" font-family="Liberation Serif" font-size="19.5" fill="#2a2a2a" stroke="#2a2a2a" stroke-width="0.5" text-anchor="middle">4</text>
<circle cx="360.8" cy="277.0" r="6.3" fill="#0c0c0c"/><text x="360.8" y="280.5" font-family="Liberation Sans" font-weight="bold" font-size="10" fill="#eee" text-anchor="middle">2</text>
<path d="M383.4 198 C383.4 175 388.4 150 394.4 136 C399.4 142 404.4 170 404.4 198 Z" fill="url(#gr)"/>
<path d="M383.4 240 C383.4 262 389.4 278 394.4 285 C398.4 278 404.4 262 404.4 240 Z" fill="url(#gr)"/>
<path d="M377.9 212 C377.9 196 387.4 190 393.4 190 C399.4 190 408.9 196 408.9 212 C406.9 220 397.4 226 393.4 226 C389.4 226 379.9 220 377.9 212Z" fill="url(#gc)"/>
<rect x="377.9" y="228" width="31" height="36" rx="13" fill="url(#gc)"/>
<path d="M385.4 240 C384.4 250 389.4 252 395.4 250 M401.4 240 C402.4 248 398.4 252 395.4 250" stroke="#b4b4a0" stroke-width="2" fill="none"/>
<text x="393.4" y="133" font-family="Liberation Serif" font-size="19.5" fill="#2a2a2a" stroke="#2a2a2a" stroke-width="0.5" text-anchor="middle">5</text>
<circle cx="410.4" cy="277.0" r="6.3" fill="#0c0c0c"/><text x="410.4" y="280.5" font-family="Liberation Sans" font-weight="bold" font-size="10" fill="#eee" text-anchor="middle">2</text>
<path d="M434.1 198 C434.1 175 438.1 150 444.1 136 C449.1 142 453.1 170 453.1 198 Z" fill="url(#gr)"/>
<path d="M434.1 240 C434.1 262 439.1 278 444.1 285 C448.1 278 453.1 262 453.1 240 Z" fill="url(#gr)"/>
<path d="M430.1 222 L431.1 204 L443.1 194 L455.1 204 L456.1 222 C452.1 228 434.1 228 430.1 222Z" fill="url(#gc)" stroke="url(#gc)" stroke-width="6" stroke-linejoin="round"/>
<path d="M430.1 236 C437.1 230 449.1 230 456.1 236 C456.1 248 449.1 258 441.1 260 C435.1 256 430.1 246 430.1 236Z" fill="url(#gc)" stroke="url(#gc)" stroke-width="3" stroke-linejoin="round"/>
<text x="443.1" y="133" font-family="Liberation Serif" font-size="19.5" fill="#2a2a2a" stroke="#2a2a2a" stroke-width="0.5" text-anchor="middle">6</text>
<circle cx="460.1" cy="277.0" r="6.3" fill="#0c0c0c"/><ellipse cx="460.4" cy="277.0" rx="2.8" ry="4.3" fill="#f0f0e8"/><ellipse cx="458.9" cy="277.3" rx="1.6" ry="3.2" fill="#202020"/>
<path d="M481.7 198 C481.7 175 487.7 150 493.7 136 C498.7 142 504.7 170 504.7 198 Z" fill="url(#gr)"/>
<path d="M481.7 240 C481.7 262 488.7 278 493.7 285 C497.7 278 504.7 262 504.7 240 Z" fill="url(#gr)"/>
<path d="M476.2 228 L476.2 202 C476.2 191 482.2 187 492.7 187 C503.2 187 509.2 191 509.2 202 L509.2 228 C500.7 231 484.7 231 476.2 228Z" fill="url(#gc)"/>
<path d="M475.2 234 C484.7 231 500.7 231 510.2 234 C509.2 248 498.7 260 492.7 262 C486.7 260 476.2 248 475.2 234Z" fill="url(#gc)"/>
<ellipse cx="492.7" cy="196" rx="6" ry="7" fill="#40b8b8"/><ellipse cx="492.7" cy="215" rx="7" ry="8" fill="#40b8b8"/><path d="M477.7 232H507.7" stroke="#40b8b8" stroke-width="4"/>
<text x="492.7" y="133" font-family="Liberation Serif" font-size="19.5" fill="#2a2a2a" stroke="#2a2a2a" stroke-width="0.5" text-anchor="middle">7</text>
<circle cx="509.7" cy="277.0" r="6.3" fill="#0c0c0c"/><ellipse cx="510.0" cy="277.0" rx="2.8" ry="4.3" fill="#f0f0e8"/><ellipse cx="508.5" cy="277.3" rx="1.6" ry="3.2" fill="#202020"/>
<path d="M531.4 198 C531.4 175 537.4 150 543.4 136 C548.4 142 554.4 170 554.4 198 Z" fill="url(#gr)"/>
<path d="M531.4 240 C531.4 262 538.4 278 543.4 285 C547.4 278 554.4 262 554.4 240 Z" fill="url(#gr)"/>
<path d="M525.9 228 L525.9 202 C525.9 191 531.9 187 542.4 187 C552.9 187 558.9 191 558.9 202 L558.9 228 C550.4 231 534.4 231 525.9 228Z" fill="url(#gc)"/>
<path d="M524.9 234 C534.4 231 550.4 231 559.9 234 C558.9 248 548.4 260 542.4 262 C536.4 260 525.9 248 524.9 234Z" fill="url(#gc)"/>
<text x="542.4" y="133" font-family="Liberation Serif" font-size="19.5" fill="#2a2a2a" stroke="#2a2a2a" stroke-width="0.5" text-anchor="middle">8</text>
<circle cx="559.4" cy="277.0" r="6.3" fill="#0c0c0c"/><ellipse cx="559.7" cy="277.0" rx="2.8" ry="4.3" fill="#f0f0e8"/><ellipse cx="558.2" cy="277.3" rx="1.6" ry="3.2" fill="#202020"/>
<path d="M581.0 198 C581.0 175 587.0 150 593.0 136 C598.0 142 604.0 170 604.0 198 Z" fill="url(#gr)"/>
<path d="M581.0 240 C581.0 262 588.0 278 593.0 285 C597.0 278 604.0 262 604.0 240 Z" fill="url(#gr)"/>
<path d="M575.5 228 L575.5 202 C575.5 191 581.5 187 592.0 187 C602.5 187 608.5 191 608.5 202 L608.5 228 C600.0 231 584.0 231 575.5 228Z" fill="url(#gc)"/>
<path d="M574.5 234 C584.0 231 600.0 231 609.5 234 C608.5 248 598.0 260 592.0 262 C586.0 260 575.5 248 574.5 234Z" fill="url(#gc)"/>
<text x="592.0" y="133" font-family="Liberation Serif" font-size="19.5" fill="#2a2a2a" stroke="#2a2a2a" stroke-width="0.5" text-anchor="middle">9</text>
<circle cx="609.0" cy="277.0" r="6.3" fill="#0c0c0c"/><ellipse cx="609.3" cy="277.0" rx="2.8" ry="4.3" fill="#f0f0e8"/><ellipse cx="607.8" cy="277.3" rx="1.6" ry="3.2" fill="#202020"/>
<path d="M630.6 198 C630.6 175 636.6 150 642.6 136 C647.6 142 653.6 170 653.6 198 Z" fill="url(#gr)"/>
<path d="M630.6 240 C630.6 262 637.6 278 642.6 285 C646.6 278 653.6 262 653.6 240 Z" fill="url(#gr)"/>
<path d="M625.1 228 L625.1 202 C625.1 191 631.1 187 641.6 187 C652.1 187 658.1 191 658.1 202 L658.1 228 C649.6 231 633.6 231 625.1 228Z" fill="url(#gred)"/>
<path d="M624.1 234 C633.6 231 649.6 231 659.1 234 C658.1 248 647.6 260 641.6 262 C635.6 260 625.1 248 624.1 234Z" fill="url(#gred)"/>
<rect x="636.6" y="150" width="10" height="52" fill="url(#gmet)"/><rect x="635.6" y="255" width="12" height="30" fill="url(#gmet)"/>
<text x="641.6" y="133" font-family="Liberation Serif" font-size="19.5" fill="#2a2a2a" stroke="#2a2a2a" stroke-width="0.5" text-anchor="middle">10</text>
<circle cx="658.6" cy="277.0" r="6.3" fill="#0c0c0c"/><ellipse cx="658.9" cy="277.0" rx="2.8" ry="4.3" fill="#f0f0e8"/><ellipse cx="657.4" cy="277.3" rx="1.6" ry="3.2" fill="#202020"/>
<path d="M682.3 198 C682.3 175 686.3 150 692.3 136 C697.3 142 701.3 170 701.3 198 Z" fill="url(#gr)"/>
<path d="M682.3 240 C682.3 262 687.3 278 692.3 285 C696.3 278 701.3 262 701.3 240 Z" fill="url(#gr)"/>
<path d="M678.3 222 L679.3 204 L691.3 194 L703.3 204 L704.3 222 C700.3 228 682.3 228 678.3 222Z" fill="url(#gc)" stroke="url(#gc)" stroke-width="6" stroke-linejoin="round"/>
<path d="M678.3 236 C685.3 230 697.3 230 704.3 236 C704.3 248 697.3 258 689.3 260 C683.3 256 678.3 246 678.3 236Z" fill="url(#gc)" stroke="url(#gc)" stroke-width="3" stroke-linejoin="round"/>
<text x="691.3" y="133" font-family="Liberation Serif" font-size="19.5" fill="#2a2a2a" stroke="#2a2a2a" stroke-width="0.5" text-anchor="middle">11</text>
<circle cx="708.3" cy="277.0" r="6.3" fill="#0c0c0c"/><ellipse cx="708.6" cy="277.0" rx="2.8" ry="4.3" fill="#f0f0e8"/><ellipse cx="707.1" cy="277.3" rx="1.6" ry="3.2" fill="#202020"/>
<path d="M730.9 198 C730.9 175 735.9 150 741.9 136 C746.9 142 751.9 170 751.9 198 Z" fill="url(#gr)"/>
<path d="M730.9 240 C730.9 262 736.9 278 741.9 285 C745.9 278 751.9 262 751.9 240 Z" fill="url(#gr)"/>
<path d="M725.4 212 C725.4 196 734.9 190 740.9 190 C746.9 190 756.4 196 756.4 212 C754.4 220 744.9 226 740.9 226 C736.9 226 727.4 220 725.4 212Z" fill="url(#gc)"/>
<rect x="725.4" y="228" width="31" height="36" rx="13" fill="url(#gc)"/>
<path d="M732.9 240 C731.9 250 736.9 252 742.9 250 M748.9 240 C749.9 248 745.9 252 742.9 250" stroke="#b4b4a0" stroke-width="2" fill="none"/>
<text x="740.9" y="133" font-family="Liberation Serif" font-size="19.5" fill="#2a2a2a" stroke="#2a2a2a" stroke-width="0.5" text-anchor="middle">12</text>
<circle cx="757.9" cy="277.0" r="6.3" fill="#0c0c0c"/><text x="757.9" y="280.5" font-family="Liberation Sans" font-weight="bold" font-size="10" fill="#eee" text-anchor="middle">3</text>
<path d="M780.6 198 C780.6 175 785.6 150 791.6 136 C796.6 142 801.6 170 801.6 198 Z" fill="url(#gr)"/>
<path d="M780.6 240 C780.6 262 786.6 278 791.6 285 C795.6 278 801.6 262 801.6 240 Z" fill="url(#gr)"/>
<path d="M775.1 212 C775.1 196 784.6 190 790.6 190 C796.6 190 806.1 196 806.1 212 C804.1 220 794.6 226 790.6 226 C786.6 226 777.1 220 775.1 212Z" fill="url(#gc)"/>
<rect x="775.1" y="228" width="31" height="36" rx="13" fill="url(#gc)"/>
<path d="M782.6 240 C781.6 250 786.6 252 792.6 250 M798.6 240 C799.6 248 795.6 252 792.6 250" stroke="#b4b4a0" stroke-width="2" fill="none"/>
<text x="790.6" y="133" font-family="Liberation Serif" font-size="19.5" fill="#2a2a2a" stroke="#2a2a2a" stroke-width="0.5" text-anchor="middle">13</text>
<circle cx="807.6" cy="277.0" r="6.3" fill="#0c0c0c"/><text x="807.6" y="280.5" font-family="Liberation Sans" font-weight="bold" font-size="10" fill="#eee" text-anchor="middle">3</text>
<path d="M823.2 196 C822.2 175 824.2 150 828.2 143 C831.2 139 834.2 144 835.2 150 C836.2 142 837.2 137 840.2 137 C843.2 137 844.2 142 845.2 150 C846.2 144 849.2 140 852.2 144 C856.2 152 858.2 175 857.2 196 Z" fill="url(#gr)"/>
<path d="M825.2 240 C825.2 262 836.2 278 841.2 285 C845.2 278 856.2 262 856.2 240 Z" fill="url(#gr)"/>
<path d="M820.7 200 C820.7 188 830.4 186 840.2 188 C849.9 186 859.7 188 859.7 200 C860.7 212 855.7 218 840.2 217 C824.7 218 819.7 212 820.7 200Z" fill="url(#gc)"/>
<path d="M820.7 232 C820.7 222 830.4 219 840.2 221 C849.9 219 859.7 222 859.7 232 L859.7 256 C859.7 266 849.9 269 840.2 267 C830.4 269 820.7 266 820.7 256Z" fill="url(#gc)"/>
<ellipse cx="840.2" cy="204" rx="19" ry="14" fill="none" stroke="#3030d0" stroke-width="1.6"/><path d="M822.2 234L834.2 240V246L846.2 246V240L858.2 234V256L846.2 252H834.2L822.2 256Z" fill="none" stroke="#3030d0" stroke-width="1.6"/>
<text x="840.2" y="133" font-family="Liberation Serif" font-size="19.5" fill="#2a2a2a" stroke="#2a2a2a" stroke-width="0.5" text-anchor="middle">14</text>
<circle cx="857.2" cy="277.0" r="6.3" fill="#0c0c0c"/><text x="857.2" y="280.5" font-family="Liberation Sans" font-weight="bold" font-size="10" fill="#eee" text-anchor="middle">3</text>
<path d="M872.8 196 C871.8 175 873.8 150 877.8 143 C880.8 139 883.8 144 884.8 150 C885.8 142 886.8 137 889.8 137 C892.8 137 893.8 142 894.8 150 C895.8 144 898.8 140 901.8 144 C905.8 152 907.8 175 906.8 196 Z" fill="url(#gr)"/>
<path d="M874.8 240 C874.8 262 885.8 278 890.8 285 C894.8 278 905.8 262 905.8 240 Z" fill="url(#gr)"/>
<path d="M870.3 200 C870.3 188 880.1 186 889.8 188 C899.6 186 909.3 188 909.3 200 C910.3 212 905.3 218 889.8 217 C874.3 218 869.3 212 870.3 200Z" fill="url(#gred)"/>
<path d="M870.3 232 C870.3 222 880.1 219 889.8 221 C899.6 219 909.3 222 909.3 232 L909.3 256 C909.3 266 899.6 269 889.8 267 C880.1 269 870.3 266 870.3 256Z" fill="url(#gred)"/>
<path d="M889.8 150 V215" stroke="#e83030" stroke-width="2.5"/>
<ellipse cx="889.8" cy="246" rx="10" ry="8" fill="#c02020" opacity="0.6"/><ellipse cx="889.8" cy="206" rx="9" ry="6" fill="#c02020" opacity="0.5"/>
<text x="889.8" y="133" font-family="Liberation Serif" font-size="19.5" fill="#2a2a2a" stroke="#2a2a2a" stroke-width="0.5" text-anchor="middle">15</text>
<circle cx="906.8" cy="277.0" r="6.3" fill="#0c0c0c"/><ellipse cx="907.1" cy="277.0" rx="2.8" ry="4.3" fill="#f0f0e8"/><ellipse cx="905.6" cy="277.3" rx="1.6" ry="3.2" fill="#202020"/>
<path d="M922.5 196 C921.5 175 923.5 150 927.5 143 C930.5 139 933.5 144 934.5 150 C935.5 142 936.5 137 939.5 137 C942.5 137 943.5 142 944.5 150 C945.5 144 948.5 140 951.5 144 C955.5 152 957.5 175 956.5 196 Z" fill="url(#gr)"/>
<path d="M924.5 240 C924.5 262 935.5 278 940.5 285 C944.5 278 955.5 262 955.5 240 Z" fill="url(#gr)"/>
<path d="M920.0 200 C920.0 188 929.7 186 939.5 188 C949.2 186 959.0 188 959.0 200 C960.0 212 955.0 218 939.5 217 C924.0 218 919.0 212 920.0 200Z" fill="url(#gc)"/>
<path d="M920.0 232 C920.0 222 929.7 219 939.5 221 C949.2 219 959.0 222 959.0 232 L959.0 256 C959.0 266 949.2 269 939.5 267 C929.7 269 920.0 266 920.0 256Z" fill="url(#gc)"/>
<path d="M927.5 238 L936.5 246 L943.5 238 M936.5 246 L939.5 256 L949.5 252" stroke="#b4b4a0" stroke-width="2" fill="none"/>
<text x="939.5" y="133" font-family="Liberation Serif" font-size="19.5" fill="#2a2a2a" stroke="#2a2a2a" stroke-width="0.5" text-anchor="middle">16</text>
<circle cx="956.5" cy="277.0" r="6.3" fill="#0c0c0c"/><ellipse cx="956.8" cy="277.0" rx="2.8" ry="4.3" fill="#f0f0e8"/><ellipse cx="955.3" cy="277.3" rx="1.6" ry="3.2" fill="#202020"/>
<path d="M174.9 320 L175.9 296 C180.9 290 190.9 292 192.9 304 L198.9 304 C198.9 292 210.9 290 213.9 296 L214.9 320Z" fill="url(#gr)"/>
<path d="M174.9 384 C174.9 405 177.9 425 182.9 438 C186.9 440 190.9 430 192.9 412 C196.9 430 202.9 440 208.9 440 C212.9 420 214.9 400 214.9 384Z" fill="url(#gr)"/>
<path d="M172.4 326 C172.4 313 183.6 309 194.9 311 C206.1 309 217.4 313 217.4 326 L217.4 338 C217.4 350 206.1 353 194.9 351 C183.6 353 172.4 350 172.4 338Z" fill="url(#gc)"/>
<path d="M172.4 364 C172.4 356 183.6 353 194.9 357 C206.1 353 217.4 356 217.4 364 L216.4 384 C206.1 391 183.6 391 173.4 384Z" fill="url(#gc)"/>
<path d="M180.9 326 L190.9 332 L200.9 326 M190.9 332 L192.9 342 M200.9 326 L208.9 334" stroke="#b4b4a0" stroke-width="2" fill="none"/>
<text x="192.9" y="457" font-family="Liberation Serif" font-size="19.5" fill="#2a2a2a" stroke="#2a2a2a" stroke-width="0.5" text-anchor="middle">32</text>
<circle cx="211.9" cy="451.0" r="6.3" fill="#0c0c0c"/><ellipse cx="212.2" cy="451.0" rx="2.8" ry="4.3" fill="#f0f0e8"/><ellipse cx="210.7" cy="451.3" rx="1.6" ry="3.2" fill="#202020"/>
<path d="M224.5 320 L225.5 296 C230.5 290 240.5 292 242.5 304 L248.5 304 C248.5 292 260.5 290 263.5 296 L264.5 320Z" fill="url(#gr)"/>
<path d="M224.5 384 C224.5 405 227.5 425 232.5 438 C236.5 440 240.5 430 242.5 412 C246.5 430 252.5 440 258.5 440 C262.5 420 264.5 400 264.5 384Z" fill="url(#gr)"/>
<path d="M222.0 326 C222.0 313 233.3 309 244.5 311 C255.8 309 267.0 313 267.0 326 L267.0 338 C267.0 350 255.8 353 244.5 351 C233.3 353 222.0 350 222.0 338Z" fill="url(#gc)"/>
<path d="M222.0 364 C222.0 356 233.3 353 244.5 357 C255.8 353 267.0 356 267.0 364 L266.0 384 C255.8 391 233.3 391 223.0 384Z" fill="url(#gc)"/>
<path d="M230.5 330 L242.5 326 L248.5 334 L262.5 330 L262.5 340 L248.5 342 L240.5 336 L230.5 338Z" fill="#40a8a0"/><path d="M263.5 356 V380" stroke="#40a8a0" stroke-width="3"/>
<text x="242.5" y="457" font-family="Liberation Serif" font-size="19.5" fill="#2a2a2a" stroke="#2a2a2a" stroke-width="0.5" text-anchor="middle">31</text>
<circle cx="261.5" cy="451.0" r="6.3" fill="#0c0c0c"/><ellipse cx="261.8" cy="451.0" rx="2.8" ry="4.3" fill="#f0f0e8"/><ellipse cx="260.3" cy="451.3" rx="1.6" ry="3.2" fill="#202020"/>
<path d="M274.2 320 L275.2 296 C280.2 290 290.2 292 292.2 304 L298.2 304 C298.2 292 310.2 290 313.2 296 L314.2 320Z" fill="url(#gr)"/>
<path d="M274.2 384 C274.2 405 277.2 425 282.2 438 C286.2 440 290.2 430 292.2 412 C296.2 430 302.2 440 308.2 440 C312.2 420 314.2 400 314.2 384Z" fill="url(#gr)"/>
<path d="M271.7 326 C271.7 313 282.9 309 294.2 311 C305.4 309 316.7 313 316.7 326 L316.7 338 C316.7 350 305.4 353 294.2 351 C282.9 353 271.7 350 271.7 338Z" fill="url(#gred)"/>
<path d="M271.7 364 C271.7 356 282.9 353 294.2 357 C305.4 353 316.7 356 316.7 364 L315.7 384 C305.4 391 282.9 391 272.7 384Z" fill="url(#gred)"/>
<path d="M286.2 385 L284.2 430 M300.2 385 L306.2 432" stroke="#d83030" stroke-width="3.5"/>
<text x="292.2" y="457" font-family="Liberation Serif" font-size="19.5" fill="#2a2a2a" stroke="#2a2a2a" stroke-width="0.5" text-anchor="middle">30</text>
<circle cx="311.2" cy="451.0" r="6.3" fill="#0c0c0c"/><text x="311.2" y="454.5" font-family="Liberation Sans" font-weight="bold" font-size="10" fill="#eee" text-anchor="middle">2</text>
<path d="M333.8 318 C333.8 306 339.8 296 343.8 291 C347.8 296 353.8 306 353.8 318Z" fill="url(#gr)"/>
<path d="M333.8 370 C333.8 400 338.8 428 343.8 440 C348.8 428 353.8 400 353.8 370Z" fill="url(#gr)"/>
<rect x="328.3" y="310" width="31" height="33" rx="13" fill="url(#gc)"/>
<path d="M328.3 350 C328.3 342 337.8 347 343.8 347 C349.8 347 359.3 342 359.3 352 C359.3 368 349.8 384 343.8 384 C337.8 384 328.3 368 328.3 350Z" fill="url(#gc)"/>
<path d="M335.8 324 C339.8 330 347.8 330 351.8 324" stroke="#b8b8a4" stroke-width="2" fill="none"/>
<text x="341.8" y="457" font-family="Liberation Serif" font-size="19.5" fill="#2a2a2a" stroke="#2a2a2a" stroke-width="0.5" text-anchor="middle">29</text>
<circle cx="360.8" cy="451.0" r="6.3" fill="#0c0c0c"/><text x="360.8" y="454.5" font-family="Liberation Sans" font-weight="bold" font-size="10" fill="#eee" text-anchor="middle">2</text>
<path d="M383.4 318 C383.4 306 389.4 296 393.4 291 C397.4 296 403.4 306 403.4 318Z" fill="url(#gr)"/>
<path d="M383.4 370 C383.4 400 388.4 428 393.4 440 C398.4 428 403.4 400 403.4 370Z" fill="url(#gr)"/>
<rect x="377.9" y="310" width="31" height="33" rx="13" fill="url(#gc)"/>
<path d="M377.9 350 C377.9 342 387.4 347 393.4 347 C399.4 347 408.9 342 408.9 352 C408.9 368 399.4 384 393.4 384 C387.4 384 377.9 368 377.9 350Z" fill="url(#gc)"/>
<path d="M385.4 324 C389.4 330 397.4 330 401.4 324" stroke="#b8b8a4" stroke-width="2" fill="none"/>
<text x="391.4" y="457" font-family="Liberation Serif" font-size="19.5" fill="#2a2a2a" stroke="#2a2a2a" stroke-width="0.5" text-anchor="middle">28</text>
<circle cx="410.4" cy="451.0" r="6.3" fill="#0c0c0c"/><text x="410.4" y="454.5" font-family="Liberation Sans" font-weight="bold" font-size="10" fill="#eee" text-anchor="middle">2</text>
<path d="M434.1 318 C434.1 306 439.1 296 443.1 291 C447.1 296 452.1 306 452.1 318Z" fill="url(#gr)"/>
<path d="M434.1 370 C434.1 400 438.1 428 443.1 440 C448.1 428 452.1 400 452.1 370Z" fill="url(#gr)"/>
<path d="M430.1 330 L439.1 306 L454.1 322 L456.1 334 C447.1 342 439.1 342 430.1 330Z" fill="url(#gc)" stroke="url(#gc)" stroke-width="5" stroke-linejoin="round"/>
<path d="M430.1 344 C437.1 338 449.1 338 456.1 344 C457.1 360 454.1 372 444.1 378 C432.1 372 429.1 360 430.1 344Z" fill="url(#gc)"/>
<text x="441.1" y="457" font-family="Liberation Serif" font-size="19.5" fill="#2a2a2a" stroke="#2a2a2a" stroke-width="0.5" text-anchor="middle">27</text>
<circle cx="460.1" cy="451.0" r="6.3" fill="#0c0c0c"/><ellipse cx="460.4" cy="451.0" rx="2.8" ry="4.3" fill="#f0f0e8"/><ellipse cx="458.9" cy="451.3" rx="1.6" ry="3.2" fill="#202020"/>
<path d="M481.7 318 C481.7 306 488.7 296 492.7 291 C496.7 296 503.7 306 503.7 318Z" fill="url(#gr)"/>
<path d="M481.7 370 C481.7 400 487.7 428 492.7 440 C497.7 428 503.7 400 503.7 370Z" fill="url(#gr)"/>
<path d="M478.2 336 C478.2 322 486.7 308 492.7 306 C498.7 308 507.2 322 507.2 336 C497.7 340 487.7 340 478.2 336Z" fill="url(#gc)"/>
<path d="M476.2 340 C486.7 337 498.7 337 509.2 340 C510.2 358 507.2 372 494.7 380 C478.2 374 475.2 358 476.2 340Z" fill="url(#gc)"/>
<text x="490.7" y="457" font-family="Liberation Serif" font-size="19.5" fill="#2a2a2a" stroke="#2a2a2a" stroke-width="0.5" text-anchor="middle">26</text>
<circle cx="509.7" cy="451.0" r="6.3" fill="#0c0c0c"/><ellipse cx="510.0" cy="451.0" rx="2.8" ry="4.3" fill="#f0f0e8"/><ellipse cx="508.5" cy="451.3" rx="1.6" ry="3.2" fill="#202020"/>
<path d="M531.4 318 C531.4 306 538.4 296 542.4 291 C546.4 296 553.4 306 553.4 318Z" fill="url(#gr)"/>
<path d="M531.4 370 C531.4 400 537.4 428 542.4 440 C547.4 428 553.4 400 553.4 370Z" fill="url(#gr)"/>
<path d="M527.9 336 C527.9 322 536.4 308 542.4 306 C548.4 308 556.9 322 556.9 336 C547.4 340 537.4 340 527.9 336Z" fill="url(#gc)"/>
<path d="M525.9 340 C536.4 337 548.4 337 558.9 340 C559.9 358 556.9 372 544.4 380 C527.9 374 524.9 358 525.9 340Z" fill="url(#gc)"/>
<ellipse cx="542.4" cy="343" rx="11" ry="7" fill="none" stroke="#3838d0" stroke-width="1.6"/><path d="M532.4 343H552.4" stroke="#3838d0" stroke-width="1.2"/>
<text x="540.4" y="457" font-family="Liberation Serif" font-size="19.5" fill="#2a2a2a" stroke="#2a2a2a" stroke-width="0.5" text-anchor="middle">25</text>
<circle cx="559.4" cy="451.0" r="6.3" fill="#0c0c0c"/><ellipse cx="559.7" cy="451.0" rx="2.8" ry="4.3" fill="#f0f0e8"/><ellipse cx="558.2" cy="451.3" rx="1.6" ry="3.2" fill="#202020"/>
<path d="M581.0 318 C581.0 306 588.0 296 592.0 291 C596.0 296 603.0 306 603.0 318Z" fill="url(#gr)"/>
<path d="M581.0 370 C581.0 400 587.0 428 592.0 440 C597.0 428 603.0 400 603.0 370Z" fill="url(#gr)"/>
<path d="M577.5 336 C577.5 322 586.0 308 592.0 306 C598.0 308 606.5 322 606.5 336 C597.0 340 587.0 340 577.5 336Z" fill="url(#gc)"/>
<path d="M575.5 340 C586.0 337 598.0 337 608.5 340 C609.5 358 606.5 372 594.0 380 C577.5 374 574.5 358 575.5 340Z" fill="url(#gc)"/>
<text x="590.0" y="457" font-family="Liberation Serif" font-size="19.5" fill="#2a2a2a" stroke="#2a2a2a" stroke-width="0.5" text-anchor="middle">24</text>
<circle cx="609.0" cy="451.0" r="6.3" fill="#0c0c0c"/><ellipse cx="609.3" cy="451.0" rx="2.8" ry="4.3" fill="#f0f0e8"/><ellipse cx="607.8" cy="451.3" rx="1.6" ry="3.2" fill="#202020"/>
<path d="M630.6 318 C630.6 306 637.6 296 641.6 291 C645.6 296 652.6 306 652.6 318Z" fill="url(#gr)"/>
<path d="M630.6 370 C630.6 400 636.6 428 641.6 440 C646.6 428 652.6 400 652.6 370Z" fill="url(#gr)"/>
<path d="M627.1 336 C627.1 322 635.6 308 641.6 306 C647.6 308 656.1 322 656.1 336 C646.6 340 636.6 340 627.1 336Z" fill="url(#gc)"/>
<path d="M625.1 340 C635.6 337 647.6 337 658.1 340 C659.1 358 656.1 372 643.6 380 C627.1 374 624.1 358 625.1 340Z" fill="url(#gc)"/>
<text x="639.6" y="457" font-family="Liberation Serif" font-size="19.5" fill="#2a2a2a" stroke="#2a2a2a" stroke-width="0.5" text-anchor="middle">23</text>
<circle cx="658.6" cy="451.0" r="6.3" fill="#0c0c0c"/><ellipse cx="658.9" cy="451.0" rx="2.8" ry="4.3" fill="#f0f0e8"/><ellipse cx="657.4" cy="451.3" rx="1.6" ry="3.2" fill="#202020"/>
<path d="M682.3 318 C682.3 306 687.3 296 691.3 291 C695.3 296 700.3 306 700.3 318Z" fill="url(#gr)"/>
<path d="M682.3 370 C682.3 400 686.3 428 691.3 440 C696.3 428 700.3 400 700.3 370Z" fill="url(#gr)"/>
<path d="M678.3 330 L687.3 306 L702.3 322 L704.3 334 C695.3 342 687.3 342 678.3 330Z" fill="url(#gc)" stroke="url(#gc)" stroke-width="5" stroke-linejoin="round"/>
<path d="M678.3 344 C685.3 338 697.3 338 704.3 344 C705.3 360 702.3 372 692.3 378 C680.3 372 677.3 360 678.3 344Z" fill="url(#gc)"/>
<text x="689.3" y="457" font-family="Liberation Serif" font-size="19.5" fill="#2a2a2a" stroke="#2a2a2a" stroke-width="0.5" text-anchor="middle">22</text>
<circle cx="708.3" cy="451.0" r="6.3" fill="#0c0c0c"/><ellipse cx="708.6" cy="451.0" rx="2.8" ry="4.3" fill="#f0f0e8"/><ellipse cx="707.1" cy="451.3" rx="1.6" ry="3.2" fill="#202020"/>
<path d="M730.9 318 C730.9 306 736.9 296 740.9 291 C744.9 296 750.9 306 750.9 318Z" fill="url(#gr)"/>
<path d="M730.9 370 C730.9 400 735.9 428 740.9 440 C745.9 428 750.9 400 750.9 370Z" fill="url(#gr)"/>
<rect x="725.4" y="310" width="31" height="33" rx="13" fill="url(#gc)"/>
<path d="M725.4 350 C725.4 342 734.9 347 740.9 347 C746.9 347 756.4 342 756.4 352 C756.4 368 746.9 384 740.9 384 C734.9 384 725.4 368 725.4 350Z" fill="url(#gc)"/>
<path d="M732.9 326 L738.9 329 H742.9 L748.9 326 V338 L742.9 335 H738.9 L732.9 338Z" fill="none" stroke="#3838d0" stroke-width="1.6"/>
<text x="738.9" y="457" font-family="Liberation Serif" font-size="19.5" fill="#2a2a2a" stroke="#2a2a2a" stroke-width="0.5" text-anchor="middle">21</text>
<circle cx="757.9" cy="451.0" r="6.3" fill="#0c0c0c"/><text x="757.9" y="454.5" font-family="Liberation Sans" font-weight="bold" font-size="10" fill="#eee" text-anchor="middle">3</text>
<path d="M780.6 318 C780.6 306 786.6 296 790.6 291 C794.6 296 800.6 306 800.6 318Z" fill="url(#gr)"/>
<path d="M780.6 370 C780.6 400 785.6 428 790.6 440 C795.6 428 800.6 400 800.6 370Z" fill="url(#gr)"/>
<rect x="775.1" y="310" width="31" height="33" rx="13" fill="url(#gc)"/>
<path d="M775.1 350 C775.1 342 784.6 347 790.6 347 C796.6 347 806.1 342 806.1 352 C806.1 368 796.6 384 790.6 384 C784.6 384 775.1 368 775.1 350Z" fill="url(#gc)"/>
<path d="M782.6 324 C786.6 330 794.6 330 798.6 324" stroke="#b8b8a4" stroke-width="2" fill="none"/>
<text x="788.6" y="457" font-family="Liberation Serif" font-size="19.5" fill="#2a2a2a" stroke="#2a2a2a" stroke-width="0.5" text-anchor="middle">20</text>
<circle cx="807.6" cy="451.0" r="6.3" fill="#0c0c0c"/><text x="807.6" y="454.5" font-family="Liberation Sans" font-weight="bold" font-size="10" fill="#eee" text-anchor="middle">3</text>
<path d="M820.2 320 L821.2 296 C826.2 290 836.2 292 838.2 304 L844.2 304 C844.2 292 856.2 290 859.2 296 L860.2 320Z" fill="url(#gr)"/>
<path d="M820.2 384 C820.2 405 823.2 425 828.2 438 C832.2 440 836.2 430 838.2 412 C842.2 430 848.2 440 854.2 440 C858.2 420 860.2 400 860.2 384Z" fill="url(#gr)"/>
<path d="M817.7 326 C817.7 313 828.9 309 840.2 311 C851.4 309 862.7 313 862.7 326 L862.7 338 C862.7 350 851.4 353 840.2 351 C828.9 353 817.7 350 817.7 338Z" fill="url(#gc)"/>
<path d="M817.7 364 C817.7 356 828.9 353 840.2 357 C851.4 353 862.7 356 862.7 364 L861.7 384 C851.4 391 828.9 391 818.7 384Z" fill="url(#gc)"/>
<path d="M826.2 326 L836.2 332 L846.2 326 M836.2 332 L838.2 342 M846.2 326 L854.2 334" stroke="#b4b4a0" stroke-width="2" fill="none"/>
<text x="838.2" y="457" font-family="Liberation Serif" font-size="19.5" fill="#2a2a2a" stroke="#2a2a2a" stroke-width="0.5" text-anchor="middle">19</text>
<circle cx="857.2" cy="451.0" r="6.3" fill="#0c0c0c"/><text x="857.2" y="454.5" font-family="Liberation Sans" font-weight="bold" font-size="10" fill="#eee" text-anchor="middle">3</text>
<path d="M869.8 320 L870.8 296 C875.8 290 885.8 292 887.8 304 L893.8 304 C893.8 292 905.8 290 908.8 296 L909.8 320Z" fill="url(#gr)"/>
<path d="M869.8 384 C869.8 405 872.8 425 877.8 438 C881.8 440 885.8 430 887.8 412 C891.8 430 897.8 440 903.8 440 C907.8 420 909.8 400 909.8 384Z" fill="url(#gr)"/>
<path d="M867.3 326 C867.3 313 878.6 309 889.8 311 C901.1 309 912.3 313 912.3 326 L912.3 338 C912.3 350 901.1 353 889.8 351 C878.6 353 867.3 350 867.3 338Z" fill="url(#gbl)"/>
<path d="M867.3 364 C867.3 356 878.6 353 889.8 357 C901.1 353 912.3 356 912.3 364 L911.3 384 C901.1 391 878.6 391 868.3 384Z" fill="url(#gbl)"/>
<text x="887.8" y="457" font-family="Liberation Serif" font-size="19.5" fill="#2a2a2a" stroke="#2a2a2a" stroke-width="0.5" text-anchor="middle">18</text>
<circle cx="906.8" cy="451.0" r="6.3" fill="#0c0c0c"/><ellipse cx="907.1" cy="451.0" rx="2.8" ry="4.3" fill="#f0f0e8"/><ellipse cx="905.6" cy="451.3" rx="1.6" ry="3.2" fill="#202020"/>
<path d="M919.5 320 L920.5 296 C925.5 290 935.5 292 937.5 304 L943.5 304 C943.5 292 955.5 290 958.5 296 L959.5 320Z" fill="url(#gr)"/>
<path d="M919.5 384 C919.5 405 922.5 425 927.5 438 C931.5 440 935.5 430 937.5 412 C941.5 430 947.5 440 953.5 440 C957.5 420 959.5 400 959.5 384Z" fill="url(#gr)"/>
<path d="M917.0 326 C917.0 313 928.2 309 939.5 311 C950.7 309 962.0 313 962.0 326 L962.0 338 C962.0 350 950.7 353 939.5 351 C928.2 353 917.0 350 917.0 338Z" fill="url(#gc)"/>
<path d="M917.0 364 C917.0 356 928.2 353 939.5 357 C950.7 353 962.0 356 962.0 364 L961.0 384 C950.7 391 928.2 391 918.0 384Z" fill="url(#gc)"/>
<path d="M925.5 326 L935.5 332 L945.5 326 M935.5 332 L937.5 342 M945.5 326 L953.5 334" stroke="#b4b4a0" stroke-width="2" fill="none"/>
<text x="937.5" y="457" font-family="Liberation Serif" font-size="19.5" fill="#2a2a2a" stroke="#2a2a2a" stroke-width="0.5" text-anchor="middle">17</text>
<circle cx="956.5" cy="451.0" r="6.3" fill="#0c0c0c"/><ellipse cx="956.8" cy="451.0" rx="2.8" ry="4.3" fill="#f0f0e8"/><ellipse cx="955.3" cy="451.3" rx="1.6" ry="3.2" fill="#202020"/>
<path d="M174.9 141 L212.9 282 M214.9 141 L176.9 282" stroke="#2a8c8c" stroke-width="3"/>
<path d="M222.5 142 L262.5 282 M266.5 142 L226.5 282" stroke="#f4f400" stroke-width="3"/>
<path d="M423.1 141 L459.1 280 M463.1 141 L427.1 280" stroke="#f4f400" stroke-width="3"/>
<path d="M917.5 141 L957.5 282 M961.5 141 L921.5 282" stroke="#2a8c8c" stroke-width="3"/>
<path d="M172.9 295 L210.9 444 M216.9 295 L178.9 444" stroke="#2a8c8c" stroke-width="3"/>
</svg>

<!-- bottom left panel -->
<div class="a" style="left:154px;top:460px;width:829px;height:550px;background:#fff"></div>
<div class="a" style="left:155px;top:482px;width:828px;height:1px;background:#d0d0d0"></div>
<div class="a" style="left:155.5px;top:462px;width:99.5px;height:21px;background:#f4f4f4;border:1px solid #d0d0d0;border-bottom:none"></div>
<div class="t" style="left:176.4px;top:467px;font-size:10.7px;color:#333">Charting</div>
<div class="a" style="left:258px;top:463px;width:94.0px;height:19px;background:#f0f0f0;border:1px solid #d0d0d0;border-bottom:1px solid #d0d0d0"></div>
<div class="t" style="left:277.3px;top:467px;font-size:10.7px;color:#333">Images</div>
<div class="a" style="left:354px;top:463px;width:122.6px;height:19px;background:#f0f0f0;border:1px solid #d0d0d0;border-bottom:1px solid #d0d0d0"></div>
<div class="t" style="left:374px;top:467px;font-size:10.7px;color:#333">Treatment Plan(s)</div>
<div class="a" style="left:478.6px;top:463px;width:82.4px;height:19px;background:#ffffe8;border:1px solid #d0d0d0;border-bottom:1px solid #d0d0d0"></div>
<svg class="a" style="left:481.6px;top:465px" width="14" height="14" viewBox="0 0 16 16"><path d="M6 1H10V6H15V10H10V15H6V10H1V6H6Z" fill="#e00000"/></svg>
<div class="t" style="left:496.5px;top:467px;font-size:10.7px;color:#e02020">Alerts</div>
<div class="a" style="left:161px;top:490px;width:116px;height:135px;border:1px solid #c8c8c8;border-radius:2px"></div>
<div class="t" style="left:169px;top:484px;padding:0 3px;background:#fff;font-size:13px;color:#333">View Mode</div>
<div class="a" style="left:165px;top:498.0px;width:73px;height:17px;background:#808080;border:1px solid #c0c0c0"></div>
<div class="t" style="left:165px;width:74px;text-align:center;top:501.0px;font-size:12.5px;color:#d4d4d4">Conditions</div>
<div class="a" style="left:243px;top:500.0px;width:14px;height:13px;background:#800000;border:1px solid #555"></div>
<svg class="a" style="left:262px;top:503.0px" width="10" height="6"><path d="M1 1H9L5 5Z" fill="#111"/></svg>
<div class="a" style="left:242px;top:517.0px;width:32px;height:1px;background:#a0a0a0"></div>
<div class="a" style="left:165px;top:519.5px;width:73px;height:17px;background:#808080;border:1px solid #c0c0c0"></div>
<div class="t" style="left:165px;width:74px;text-align:center;top:522.5px;font-size:12.5px;color:#d4d4d4">Planned</div>
<div class="a" style="left:243px;top:521.5px;width:14px;height:13px;background:#ff0000;border:1px solid #555"></div>
<svg class="a" style="left:262px;top:524.5px" width="10" height="6"><path d="M1 1H9L5 5Z" fill="#111"/></svg>
<div class="a" style="left:242px;top:538.5px;width:32px;height:1px;background:#a0a0a0"></div>
<div class="a" style="left:165px;top:541.0px;width:73px;height:17px;background:#808080;border:1px solid #c0c0c0"></div>
<div class="t" style="left:165px;width:74px;text-align:center;top:544.0px;font-size:12.5px;color:#d4d4d4">Completed</div>
<div class="a" style="left:243px;top:543.0px;width:14px;height:13px;background:#0000ff;border:1px solid #555"></div>
<svg class="a" style="left:262px;top:546.0px" width="10" height="6"><path d="M1 1H9L5 5Z" fill="#111"/></svg>
<div class="a" style="left:242px;top:560.0px;width:32px;height:1px;background:#a0a0a0"></div>
<div class="a" style="left:165px;top:562.5px;width:73px;height:17px;background:#808080;border:1px solid #c0c0c0"></div>
<div class="t" style="left:165px;width:74px;text-align:center;top:565.5px;font-size:12.5px;color:#d4d4d4">Existing</div>
<div class="a" style="left:243px;top:564.5px;width:14px;height:13px;background:#008080;border:1px solid #555"></div>
<svg class="a" style="left:262px;top:567.5px" width="10" height="6"><path d="M1 1H9L5 5Z" fill="#111"/></svg>
<div class="a" style="left:242px;top:581.5px;width:32px;height:1px;background:#a0a0a0"></div>
<div class="a" style="left:165px;top:584.0px;width:73px;height:17px;background:#808080;border:1px solid #c0c0c0"></div>
<div class="t" style="left:165px;width:74px;text-align:center;top:587.0px;font-size:12.5px;color:#d4d4d4">Declined</div>
<div class="a" style="left:243px;top:586.0px;width:14px;height:13px;background:#ffff00;border:1px solid #555"></div>
<svg class="a" style="left:262px;top:589.0px" width="10" height="6"><path d="M1 1H9L5 5Z" fill="#111"/></svg>
<div class="a" style="left:242px;top:603.0px;width:32px;height:1px;background:#a0a0a0"></div>
<div class="a" style="left:165px;top:605.5px;width:73px;height:17px;background:#808080;border:1px solid #c0c0c0"></div>
<div class="t" style="left:165px;width:74px;text-align:center;top:608.5px;font-size:12.5px;color:#d4d4d4">Referred Out</div>
<div class="a" style="left:243px;top:607.5px;width:14px;height:13px;background:#800080;border:1px solid #555"></div>
<svg class="a" style="left:262px;top:610.5px" width="10" height="6"><path d="M1 1H9L5 5Z" fill="#111"/></svg>
<div class="a" style="left:242px;top:624.5px;width:32px;height:1px;background:#a0a0a0"></div>
<div class="a" style="left:161px;top:639px;width:116px;height:87px;border:1px solid #c8c8c8;border-radius:2px"></div>
<div class="t" style="left:169px;top:632px;padding:0 3px;background:#fff;font-size:13px;color:#333">Entry Mode</div>
<div class="t" style="left:164px;top:651px;font-size:12.5px;color:#222">Planned</div>
<svg class="a" style="left:263px;top:655px" width="10" height="6"><path d="M1 1H9L5 5Z" fill="#111"/></svg>
<div class="a" style="left:163px;top:668px;width:112px;height:1px;background:#a0a0a0"></div>
<div class="t" style="left:162px;top:678px;font-size:12.5px;color:#444">Prvdr:<span style="color:#222">BRO00</span></div>
<svg class="a" style="left:261px;top:683px" width="10" height="6"><path d="M1 1H9L5 5Z" fill="#111"/></svg>
<div class="a" style="left:195px;top:696px;width:80px;height:1px;background:#a0a0a0"></div>
<div class="t" style="left:173px;top:703px;font-size:12.5px;color:#444">Hyg:<span style="color:#222">BRO00</span></div>
<svg class="a" style="left:261px;top:707px" width="10" height="6"><path d="M1 1H9L5 5Z" fill="#111"/></svg>
<div class="a" style="left:195px;top:720px;width:80px;height:1px;background:#a0a0a0"></div>
<div class="t" style="left:296px;top:487px;font-size:12.5px;color:#333">Primary Ins:</div>
<svg class="a" style="left:367px;top:485px" width="16" height="16" viewBox="0 0 16 16"><path d="M3 2L12 1L14 13L5 15Z" fill="#c8d4f0" stroke="#8090d0"/></svg>
<div class="t" style="left:383px;top:487px;font-size:12.5px;color:#2a2aff">Metlife</div>
<div class="t" style="left:545px;top:487px;font-size:12.5px;color:#333">Used + Ins Pending/Max: Individual: 0.00 +  / 2000</div>
<div class="a" style="left:283px;top:501.5px;width:680px;height:20px;background:#c4c4c4"></div>
<div class="a" style="left:332.3px;top:501.5px;width:2px;height:20px;background:#e8e8e8"></div>
<div class="t" style="left:296.4px;top:505.5px;width:34.9px;overflow:hidden;font-size:12.7px;-webkit-text-stroke:0.3px #333;color:#333">Order</div>
<div class="a" style="left:407.0px;top:501.5px;width:2px;height:20px;background:#e8e8e8"></div>
<div class="t" style="left:335.3px;top:505.5px;width:70.7px;overflow:hidden;font-size:12.7px;-webkit-text-stroke:0.3px #333;color:#333">Date</div>
<div class="a" style="left:490.5px;top:501.5px;width:2px;height:20px;background:#e8e8e8"></div>
<div class="t" style="left:410.0px;top:505.5px;width:79.5px;overflow:hidden;font-size:12.7px;-webkit-text-stroke:0.3px #333;color:#333">Account Code</div>
<div class="a" style="left:627.3px;top:501.5px;width:2px;height:20px;background:#e8e8e8"></div>
<div class="t" style="left:493.5px;top:505.5px;width:132.8px;overflow:hidden;font-size:12.7px;-webkit-text-stroke:0.3px #333;color:#333">Description</div>
<div class="a" style="left:674.0px;top:501.5px;width:2px;height:20px;background:#e8e8e8"></div>
<div class="t" style="left:630.3px;top:505.5px;width:42.7px;overflow:hidden;font-size:12.7px;-webkit-text-stroke:0.3px #333;color:#333">Tooth</div>
<div class="a" style="left:727.4px;top:501.5px;width:2px;height:20px;background:#e8e8e8"></div>
<div class="t" style="left:677.0px;top:505.5px;width:49.4px;overflow:hidden;font-size:12.7px;-webkit-text-stroke:0.3px #333;color:#333">Surface</div>
<div class="a" style="left:779.5px;top:501.5px;width:2px;height:20px;background:#e8e8e8"></div>
<div class="t" style="left:730.4px;top:505.5px;width:48.1px;overflow:hidden;font-size:12.7px;-webkit-text-stroke:0.3px #333;color:#333">Provider</div>
<div class="a" style="left:833.9px;top:501.5px;width:2px;height:20px;background:#e8e8e8"></div>
<div class="t" style="left:782.5px;top:505.5px;width:50.4px;overflow:hidden;font-size:12.7px;-webkit-text-stroke:0.3px #333;color:#333">Fee</div>
<div class="a" style="left:895.4px;top:501.5px;width:2px;height:20px;background:#e8e8e8"></div>
<div class="t" style="left:836.9px;top:505.5px;width:57.5px;overflow:hidden;font-size:12.7px;-webkit-text-stroke:0.3px #333;color:#333">Status</div>
<div class="a" style="left:962.3px;top:501.5px;width:2px;height:20px;background:#e8e8e8"></div>
<div class="t" style="left:898.4px;top:505.5px;width:62.9px;overflow:hidden;font-size:12.7px;-webkit-text-stroke:0.3px #333;color:#333">Date Create</div>
<div class="a" style="left:283px;top:521.5px;width:11px;height:19px;background:#c4c4c4"></div>
<div class="a" style="left:295px;top:521.5px;width:668px;height:19px;background:#ffe0e0"></div>
<div class="t" style="left:296.4px;top:524.5px;width:34.9px;overflow:hidden;text-align:right;font-size:12.7px;-webkit-text-stroke:0.3px #4a9a3a;color:#4a9a3a">3</div>
<div class="t" style="left:410.0px;top:524.5px;width:79.5px;overflow:hidden;text-align:left;font-size:12.7px;-webkit-text-stroke:0.3px #222;color:#222">D2393</div>
<div class="t" style="left:493.5px;top:524.5px;width:132.8px;overflow:hidden;text-align:left;font-size:12.7px;-webkit-text-stroke:0.3px #222;color:#222">resin-based composite - one surface</div>
<div class="t" style="left:630.3px;top:524.5px;width:42.7px;overflow:hidden;text-align:left;font-size:12.7px;-webkit-text-stroke:0.3px #222;color:#222">2</div>
<div class="t" style="left:677.0px;top:524.5px;width:49.4px;overflow:hidden;text-align:left;font-size:12.7px;-webkit-text-stroke:0.3px #222;color:#222">MOD</div>
<div class="t" style="left:730.4px;top:524.5px;width:48.1px;overflow:hidden;text-align:left;font-size:12.7px;-webkit-text-stroke:0.3px #222;color:#222">BRO00</div>
<div class="t" style="left:782.5px;top:524.5px;width:50.4px;overflow:hidden;text-align:right;font-size:12.7px;-webkit-text-stroke:0.3px #222;color:#222">171</div>
<div class="t" style="left:836.9px;top:524.5px;width:57.5px;overflow:hidden;text-align:left;font-size:12.7px;-webkit-text-stroke:0.3px #222;color:#222">Planned</div>
<div class="t" style="left:898.4px;top:524.5px;width:62.9px;overflow:hidden;text-align:left;font-size:12.7px;-webkit-text-stroke:0.3px #222;color:#222">12/19/2019</div>
<div class="a" style="left:283px;top:541.5px;width:11px;height:19px;background:#c4c4c4"></div>
<div class="a" style="left:295px;top:541.5px;width:668px;height:19px;background:#ffe0e0"></div>
<div class="t" style="left:296.4px;top:544.5px;width:34.9px;overflow:hidden;text-align:right;font-size:12.7px;-webkit-text-stroke:0.3px #4a9a3a;color:#4a9a3a">3</div>
<div class="t" style="left:410.0px;top:544.5px;width:79.5px;overflow:hidden;text-align:left;font-size:12.7px;-webkit-text-stroke:0.3px #222;color:#222">D3330</div>
<div class="t" style="left:493.5px;top:544.5px;width:132.8px;overflow:hidden;text-align:left;font-size:12.7px;-webkit-text-stroke:0.3px #222;color:#222">endodontic therapy - molar</div>
<div class="t" style="left:630.3px;top:544.5px;width:42.7px;overflow:hidden;text-align:left;font-size:12.7px;-webkit-text-stroke:0.3px #222;color:#222">30</div>
<div class="t" style="left:730.4px;top:544.5px;width:48.1px;overflow:hidden;text-align:left;font-size:12.7px;-webkit-text-stroke:0.3px #222;color:#222">BRO00</div>
<div class="t" style="left:782.5px;top:544.5px;width:50.4px;overflow:hidden;text-align:right;font-size:12.7px;-webkit-text-stroke:0.3px #222;color:#222">855</div>
<div class="t" style="left:836.9px;top:544.5px;width:57.5px;overflow:hidden;text-align:left;font-size:12.7px;-webkit-text-stroke:0.3px #222;color:#222">Planned</div>
<div class="t" style="left:898.4px;top:544.5px;width:62.9px;overflow:hidden;text-align:left;font-size:12.7px;-webkit-text-stroke:0.3px #222;color:#222">12/19/2019</div>
<div class="a" style="left:283px;top:561.5px;width:11px;height:19px;background:#c4c4c4"></div>
<div class="a" style="left:295px;top:561.5px;width:668px;height:19px;background:#ffe0e0"></div>
<div class="t" style="left:296.4px;top:564.5px;width:34.9px;overflow:hidden;text-align:right;font-size:12.7px;-webkit-text-stroke:0.3px #4a9a3a;color:#4a9a3a">3</div>
<div class="t" style="left:410.0px;top:564.5px;width:79.5px;overflow:hidden;text-align:left;font-size:12.7px;-webkit-text-stroke:0.3px #222;color:#222">D2954</div>
<div class="t" style="left:493.5px;top:564.5px;width:132.8px;overflow:hidden;text-align:left;font-size:12.7px;-webkit-text-stroke:0.3px #222;color:#222">prefabricated post and core</div>
<div class="t" style="left:630.3px;top:564.5px;width:42.7px;overflow:hidden;text-align:left;font-size:12.7px;-webkit-text-stroke:0.3px #222;color:#222">30</div>
<div class="t" style="left:730.4px;top:564.5px;width:48.1px;overflow:hidden;text-align:left;font-size:12.7px;-webkit-text-stroke:0.3px #222;color:#222">BRO00</div>
<div class="t" style="left:782.5px;top:564.5px;width:50.4px;overflow:hidden;text-align:right;font-size:12.7px;-webkit-text-stroke:0.3px #222;color:#222">247.5</div>
<div class="t" style="left:836.9px;top:564.5px;width:57.5px;overflow:hidden;text-align:left;font-size:12.7px;-webkit-text-stroke:0.3px #222;color:#222">Planned</div>
<div class="t" style="left:898.4px;top:564.5px;width:62.9px;overflow:hidden;text-align:left;font-size:12.7px;-webkit-text-stroke:0.3px #222;color:#222">12/19/2019</div>
<div class="a" style="left:283px;top:581.5px;width:11px;height:19px;background:#c4c4c4"></div>
<div class="a" style="left:295px;top:581.5px;width:668px;height:19px;background:#ffe0e0"></div>
<div class="t" style="left:296.4px;top:584.5px;width:34.9px;overflow:hidden;text-align:right;font-size:12.7px;-webkit-text-stroke:0.3px #4a9a3a;color:#4a9a3a">3</div>
<div class="t" style="left:410.0px;top:584.5px;width:79.5px;overflow:hidden;text-align:left;font-size:12.7px;-webkit-text-stroke:0.3px #222;color:#222">D2750</div>
<div class="t" style="left:493.5px;top:584.5px;width:132.8px;overflow:hidden;text-align:left;font-size:12.7px;-webkit-text-stroke:0.3px #222;color:#222">crown - porcelain fused</div>
<div class="t" style="left:630.3px;top:584.5px;width:42.7px;overflow:hidden;text-align:left;font-size:12.7px;-webkit-text-stroke:0.3px #222;color:#222">30</div>
<div class="t" style="left:730.4px;top:584.5px;width:48.1px;overflow:hidden;text-align:left;font-size:12.7px;-webkit-text-stroke:0.3px #222;color:#222">BRO00</div>
<div class="t" style="left:782.5px;top:584.5px;width:50.4px;overflow:hidden;text-align:right;font-size:12.7px;-webkit-text-stroke:0.3px #222;color:#222">900</div>
<div class="t" style="left:836.9px;top:584.5px;width:57.5px;overflow:hidden;text-align:left;font-size:12.7px;-webkit-text-stroke:0.3px #222;color:#222">Planned</div>
<div class="t" style="left:898.4px;top:584.5px;width:62.9px;overflow:hidden;text-align:left;font-size:12.7px;-webkit-text-stroke:0.3px #222;color:#222">12/19/2019</div>
<div class="a" style="left:283px;top:601.5px;width:11px;height:19px;background:#c4c4c4"></div>
<div class="a" style="left:295px;top:601.5px;width:668px;height:19px;background:#ffe0e0"></div>
<div class="t" style="left:296.4px;top:604.5px;width:34.9px;overflow:hidden;text-align:right;font-size:12.7px;-webkit-text-stroke:0.3px #c03030;color:#c03030">4</div>
<div class="t" style="left:410.0px;top:604.5px;width:79.5px;overflow:hidden;text-align:left;font-size:12.7px;-webkit-text-stroke:0.3px #222;color:#222">D6010</div>
<div class="t" style="left:493.5px;top:604.5px;width:132.8px;overflow:hidden;text-align:left;font-size:12.7px;-webkit-text-stroke:0.3px #222;color:#222">surgical placement of implant</div>
<div class="t" style="left:630.3px;top:604.5px;width:42.7px;overflow:hidden;text-align:left;font-size:12.7px;-webkit-text-stroke:0.3px #222;color:#222">10</div>
<div class="t" style="left:730.4px;top:604.5px;width:48.1px;overflow:hidden;text-align:left;font-size:12.7px;-webkit-text-stroke:0.3px #222;color:#222">BRO00</div>
<div class="t" style="left:782.5px;top:604.5px;width:50.4px;overflow:hidden;text-align:right;font-size:12.7px;-webkit-text-stroke:0.3px #222;color:#222">1350</div>
<div class="t" style="left:836.9px;top:604.5px;width:57.5px;overflow:hidden;text-align:left;font-size:12.7px;-webkit-text-stroke:0.3px #222;color:#222">Planned</div>
<div class="t" style="left:898.4px;top:604.5px;width:62.9px;overflow:hidden;text-align:left;font-size:12.7px;-webkit-text-stroke:0.3px #222;color:#222">7/22/2020 1</div>
<div class="a" style="left:283px;top:621.5px;width:11px;height:19px;background:#c4c4c4"></div>
<div class="a" style="left:295px;top:621.5px;width:668px;height:19px;background:#ffe0e0"></div>
<div class="t" style="left:296.4px;top:624.5px;width:34.9px;overflow:hidden;text-align:right;font-size:12.7px;-webkit-text-stroke:0.3px #c03030;color:#c03030">4</div>
<div class="t" style="left:410.0px;top:624.5px;width:79.5px;overflow:hidden;text-align:left;font-size:12.7px;-webkit-text-stroke:0.3px #222;color:#222">D6056</div>
<div class="t" style="left:493.5px;top:624.5px;width:132.8px;overflow:hidden;text-align:left;font-size:12.7px;-webkit-text-stroke:0.3px #222;color:#222">prefabricated abutment</div>
<div class="t" style="left:630.3px;top:624.5px;width:42.7px;overflow:hidden;text-align:left;font-size:12.7px;-webkit-text-stroke:0.3px #222;color:#222">10</div>
<div class="t" style="left:730.4px;top:624.5px;width:48.1px;overflow:hidden;text-align:left;font-size:12.7px;-webkit-text-stroke:0.3px #222;color:#222">BRO00</div>
<div class="t" style="left:782.5px;top:624.5px;width:50.4px;overflow:hidden;text-align:right;font-size:12.7px;-webkit-text-stroke:0.3px #222;color:#222">585</div>
<div class="t" style="left:836.9px;top:624.5px;width:57.5px;overflow:hidden;text-align:left;font-size:12.7px;-webkit-text-stroke:0.3px #222;color:#222">Planned</div>
<div class="t" style="left:898.4px;top:624.5px;width:62.9px;overflow:hidden;text-align:left;font-size:12.7px;-webkit-text-stroke:0.3px #222;color:#222">7/22/2020 1</div>
<div class="a" style="left:283px;top:641.5px;width:11px;height:19px;background:#c4c4c4"></div>
<div class="a" style="left:295px;top:641.5px;width:668px;height:19px;background:#ffe0e0"></div>
<div class="t" style="left:296.4px;top:644.5px;width:34.9px;overflow:hidden;text-align:right;font-size:12.7px;-webkit-text-stroke:0.3px #c03030;color:#c03030">4</div>
<div class="t" style="left:410.0px;top:644.5px;width:79.5px;overflow:hidden;text-align:left;font-size:12.7px;-webkit-text-stroke:0.3px #222;color:#222">D6059</div>
<div class="t" style="left:493.5px;top:644.5px;width:132.8px;overflow:hidden;text-align:left;font-size:12.7px;-webkit-text-stroke:0.3px #222;color:#222">abutment supported porcelain</div>
<div class="t" style="left:630.3px;top:644.5px;width:42.7px;overflow:hidden;text-align:left;font-size:12.7px;-webkit-text-stroke:0.3px #222;color:#222">10</div>
<div class="t" style="left:730.4px;top:644.5px;width:48.1px;overflow:hidden;text-align:left;font-size:12.7px;-webkit-text-stroke:0.3px #222;color:#222">BRO00</div>
<div class="t" style="left:782.5px;top:644.5px;width:50.4px;overflow:hidden;text-align:right;font-size:12.7px;-webkit-text-stroke:0.3px #222;color:#222">1080</div>
<div class="t" style="left:836.9px;top:644.5px;width:57.5px;overflow:hidden;text-align:left;font-size:12.7px;-webkit-text-stroke:0.3px #222;color:#222">Planned</div>
<div class="t" style="left:898.4px;top:644.5px;width:62.9px;overflow:hidden;text-align:left;font-size:12.7px;-webkit-text-stroke:0.3px #222;color:#222">7/22/2020 1</div>
<div class="a" style="left:283px;top:661.5px;width:11px;height:19px;background:#c4c4c4"></div>
<div class="a" style="left:295px;top:661.5px;width:668px;height:19px;background:#ffe0e0"></div>
<div class="t" style="left:296.4px;top:664.5px;width:34.9px;overflow:hidden;text-align:right;font-size:12.7px;-webkit-text-stroke:0.3px #3030a0;color:#3030a0">1</div>
<div class="t" style="left:335.3px;top:664.5px;width:70.7px;overflow:hidden;text-align:left;font-size:12.7px;-webkit-text-stroke:0.3px #222;color:#222">2/3/2020</div>
<div class="t" style="left:410.0px;top:664.5px;width:79.5px;overflow:hidden;text-align:left;font-size:12.7px;-webkit-text-stroke:0.3px #222;color:#222">D2954</div>
<div class="t" style="left:493.5px;top:664.5px;width:132.8px;overflow:hidden;text-align:left;font-size:12.7px;-webkit-text-stroke:0.3px #222;color:#222">prefabricated post and core</div>
<div class="t" style="left:630.3px;top:664.5px;width:42.7px;overflow:hidden;text-align:left;font-size:12.7px;-webkit-text-stroke:0.3px #222;color:#222">15</div>
<div class="t" style="left:730.4px;top:664.5px;width:48.1px;overflow:hidden;text-align:left;font-size:12.7px;-webkit-text-stroke:0.3px #222;color:#222">BRO00</div>
<div class="t" style="left:782.5px;top:664.5px;width:50.4px;overflow:hidden;text-align:right;font-size:12.7px;-webkit-text-stroke:0.3px #222;color:#222">247.5</div>
<div class="t" style="left:836.9px;top:664.5px;width:57.5px;overflow:hidden;text-align:left;font-size:12.7px;-webkit-text-stroke:0.3px #222;color:#222">Planned</div>
<div class="t" style="left:898.4px;top:664.5px;width:62.9px;overflow:hidden;text-align:left;font-size:12.7px;-webkit-text-stroke:0.3px #222;color:#222">3/6/2019 2</div>
<div class="a" style="left:283px;top:681.5px;width:11px;height:19px;background:#c4c4c4"></div>
<div class="a" style="left:295px;top:681.5px;width:668px;height:19px;background:#ffe0e0"></div>
<div class="t" style="left:296.4px;top:684.5px;width:34.9px;overflow:hidden;text-align:right;font-size:12.7px;-webkit-text-stroke:0.3px #3030a0;color:#3030a0">1</div>
<div class="t" style="left:335.3px;top:684.5px;width:70.7px;overflow:hidden;text-align:left;font-size:12.7px;-webkit-text-stroke:0.3px #222;color:#222">2/3/2020</div>
<div class="t" style="left:410.0px;top:684.5px;width:79.5px;overflow:hidden;text-align:left;font-size:12.7px;-webkit-text-stroke:0.3px #222;color:#222">D2750</div>
<div class="t" style="left:493.5px;top:684.5px;width:132.8px;overflow:hidden;text-align:left;font-size:12.7px;-webkit-text-stroke:0.3px #222;color:#222">crown - porcelain fused</div>
<div class="t" style="left:630.3px;top:684.5px;width:42.7px;overflow:hidden;text-align:left;font-size:12.7px;-webkit-text-stroke:0.3px #222;color:#222">15</div>
<div class="t" style="left:730.4px;top:684.5px;width:48.1px;overflow:hidden;text-align:left;font-size:12.7px;-webkit-text-stroke:0.3px #222;color:#222">BRO00</div>
<div class="t" style="left:782.5px;top:684.5px;width:50.4px;overflow:hidden;text-align:right;font-size:12.7px;-webkit-text-stroke:0.3px #222;color:#222">900</div>
<div class="t" style="left:836.9px;top:684.5px;width:57.5px;overflow:hidden;text-align:left;font-size:12.7px;-webkit-text-stroke:0.3px #222;color:#222">Planned</div>
<div class="t" style="left:898.4px;top:684.5px;width:62.9px;overflow:hidden;text-align:left;font-size:12.7px;-webkit-text-stroke:0.3px #222;color:#222">3/6/2019 2</div>
<div class="a" style="left:283px;top:701.5px;width:11px;height:19px;background:#c4c4c4"></div>
<div class="a" style="left:295px;top:701.5px;width:668px;height:19px;background:#ccccff"></div>
<div class="t" style="left:296.4px;top:704.5px;width:34.9px;overflow:hidden;text-align:right;font-size:12.7px;-webkit-text-stroke:0.3px #222;color:#222">1</div>
<div class="t" style="left:335.3px;top:704.5px;width:70.7px;overflow:hidden;text-align:left;font-size:12.7px;-webkit-text-stroke:0.3px #222;color:#222">10/20/2018</div>
<div class="t" style="left:410.0px;top:704.5px;width:79.5px;overflow:hidden;text-align:left;font-size:12.7px;-webkit-text-stroke:0.3px #222;color:#222">D6010</div>
<div class="t" style="left:493.5px;top:704.5px;width:132.8px;overflow:hidden;text-align:left;font-size:12.7px;-webkit-text-stroke:0.3px #222;color:#222">surgical placement of implant</div>
<div class="t" style="left:630.3px;top:704.5px;width:42.7px;overflow:hidden;text-align:left;font-size:12.7px;-webkit-text-stroke:0.3px #222;color:#222">3</div>
<div class="t" style="left:730.4px;top:704.5px;width:48.1px;overflow:hidden;text-align:left;font-size:12.7px;-webkit-text-stroke:0.3px #222;color:#222">BRO00</div>
<div class="t" style="left:782.5px;top:704.5px;width:50.4px;overflow:hidden;text-align:right;font-size:12.7px;-webkit-text-stroke:0.3px #222;color:#222">1350</div>
<div class="t" style="left:836.9px;top:704.5px;width:57.5px;overflow:hidden;text-align:left;font-size:12.7px;-webkit-text-stroke:0.3px #222;color:#222">Completed</div>
<div class="t" style="left:898.4px;top:704.5px;width:62.9px;overflow:hidden;text-align:left;font-size:12.7px;-webkit-text-stroke:0.3px #222;color:#222">10/20/2018</div>
<div class="a" style="left:283px;top:721.5px;width:11px;height:19px;background:#c4c4c4"></div>
<div class="a" style="left:295px;top:721.5px;width:668px;height:19px;background:#ccccff"></div>
<div class="t" style="left:335.3px;top:724.5px;width:70.7px;overflow:hidden;text-align:left;font-size:12.7px;-webkit-text-stroke:0.3px #222;color:#222">1/7/2019</div>
<div class="t" style="left:410.0px;top:724.5px;width:79.5px;overflow:hidden;text-align:left;font-size:12.7px;-webkit-text-stroke:0.3px #222;color:#222">D2393</div>
<div class="t" style="left:493.5px;top:724.5px;width:132.8px;overflow:hidden;text-align:left;font-size:12.7px;-webkit-text-stroke:0.3px #222;color:#222">resin-based composite - one</div>
<div class="t" style="left:630.3px;top:724.5px;width:42.7px;overflow:hidden;text-align:left;font-size:12.7px;-webkit-text-stroke:0.3px #222;color:#222">14</div>
<div class="t" style="left:677.0px;top:724.5px;width:49.4px;overflow:hidden;text-align:left;font-size:12.7px;-webkit-text-stroke:0.3px #222;color:#222">MOD</div>
<div class="t" style="left:730.4px;top:724.5px;width:48.1px;overflow:hidden;text-align:left;font-size:12.7px;-webkit-text-stroke:0.3px #222;color:#222">BRO00</div>
<div class="t" style="left:782.5px;top:724.5px;width:50.4px;overflow:hidden;text-align:right;font-size:12.7px;-webkit-text-stroke:0.3px #222;color:#222">171</div>
<div class="t" style="left:836.9px;top:724.5px;width:57.5px;overflow:hidden;text-align:left;font-size:12.7px;-webkit-text-stroke:0.3px #222;color:#222">Completed</div>
<div class="t" style="left:898.4px;top:724.5px;width:62.9px;overflow:hidden;text-align:left;font-size:12.7px;-webkit-text-stroke:0.3px #222;color:#222">10/20/2018</div>
<div class="a" style="left:283px;top:741.5px;width:11px;height:19px;background:#c4c4c4"></div>
<div class="a" style="left:295px;top:741.5px;width:668px;height:19px;background:#ccccff"></div>
<div class="t" style="left:335.3px;top:744.5px;width:70.7px;overflow:hidden;text-align:left;font-size:12.7px;-webkit-text-stroke:0.3px #222;color:#222">1/7/2019</div>
<div class="t" style="left:410.0px;top:744.5px;width:79.5px;overflow:hidden;text-align:left;font-size:12.7px;-webkit-text-stroke:0.3px #222;color:#222">D2391</div>
<div class="t" style="left:493.5px;top:744.5px;width:132.8px;overflow:hidden;text-align:left;font-size:12.7px;-webkit-text-stroke:0.3px #222;color:#222">resin-based composite - one</div>
<div class="t" style="left:630.3px;top:744.5px;width:42.7px;overflow:hidden;text-align:left;font-size:12.7px;-webkit-text-stroke:0.3px #222;color:#222">21</div>
<div class="t" style="left:677.0px;top:744.5px;width:49.4px;overflow:hidden;text-align:left;font-size:12.7px;-webkit-text-stroke:0.3px #222;color:#222">O</div>
<div class="t" style="left:730.4px;top:744.5px;width:48.1px;overflow:hidden;text-align:left;font-size:12.7px;-webkit-text-stroke:0.3px #222;color:#222">BRO00</div>
<div class="t" style="left:782.5px;top:744.5px;width:50.4px;overflow:hidden;text-align:right;font-size:12.7px;-webkit-text-stroke:0.3px #222;color:#222">153</div>
<div class="t" style="left:836.9px;top:744.5px;width:57.5px;overflow:hidden;text-align:left;font-size:12.7px;-webkit-text-stroke:0.3px #222;color:#222">Completed</div>
<div class="t" style="left:898.4px;top:744.5px;width:62.9px;overflow:hidden;text-align:left;font-size:12.7px;-webkit-text-stroke:0.3px #222;color:#222">10/20/2018</div>
<div class="a" style="left:283px;top:761.5px;width:11px;height:19px;background:#c4c4c4"></div>
<div class="a" style="left:295px;top:761.5px;width:668px;height:19px;background:#ccccff"></div>
<div class="t" style="left:296.4px;top:764.5px;width:34.9px;overflow:hidden;text-align:right;font-size:12.7px;-webkit-text-stroke:0.3px #222;color:#222">1</div>
<div class="t" style="left:335.3px;top:764.5px;width:70.7px;overflow:hidden;text-align:left;font-size:12.7px;-webkit-text-stroke:0.3px #222;color:#222">1/7/2019</div>
<div class="t" style="left:410.0px;top:764.5px;width:79.5px;overflow:hidden;text-align:left;font-size:12.7px;-webkit-text-stroke:0.3px #222;color:#222">D2330</div>
<div class="t" style="left:493.5px;top:764.5px;width:132.8px;overflow:hidden;text-align:left;font-size:12.7px;-webkit-text-stroke:0.3px #222;color:#222">resin-based composite - one</div>
<div class="t" style="left:630.3px;top:764.5px;width:42.7px;overflow:hidden;text-align:left;font-size:12.7px;-webkit-text-stroke:0.3px #222;color:#222">25</div>
<div class="t" style="left:677.0px;top:764.5px;width:49.4px;overflow:hidden;text-align:left;font-size:12.7px;-webkit-text-stroke:0.3px #222;color:#222">I</div>
<div class="t" style="left:730.4px;top:764.5px;width:48.1px;overflow:hidden;text-align:left;font-size:12.7px;-webkit-text-stroke:0.3px #222;color:#222">BRO00</div>
<div class="t" style="left:782.5px;top:764.5px;width:50.4px;overflow:hidden;text-align:right;font-size:12.7px;-webkit-text-stroke:0.3px #222;color:#222">135</div>
<div class="t" style="left:836.9px;top:764.5px;width:57.5px;overflow:hidden;text-align:left;font-size:12.7px;-webkit-text-stroke:0.3px #222;color:#222">Completed</div>
<div class="t" style="left:898.4px;top:764.5px;width:62.9px;overflow:hidden;text-align:left;font-size:12.7px;-webkit-text-stroke:0.3px #222;color:#222">1/7/2019 1</div>
<div class="a" style="left:283px;top:781.5px;width:11px;height:19px;background:#c4c4c4"></div>
<div class="a" style="left:295px;top:781.5px;width:668px;height:19px;background:#ccccff"></div>
<div class="t" style="left:335.3px;top:784.5px;width:70.7px;overflow:hidden;text-align:left;font-size:12.7px;-webkit-text-stroke:0.3px #222;color:#222">2/6/2019</div>
<div class="t" style="left:410.0px;top:784.5px;width:79.5px;overflow:hidden;text-align:left;font-size:12.7px;-webkit-text-stroke:0.3px #222;color:#222">D2391</div>
<div class="t" style="left:493.5px;top:784.5px;width:132.8px;overflow:hidden;text-align:left;font-size:12.7px;-webkit-text-stroke:0.3px #222;color:#222">resin-based composite - one</div>
<div class="t" style="left:630.3px;top:784.5px;width:42.7px;overflow:hidden;text-align:left;font-size:12.7px;-webkit-text-stroke:0.3px #222;color:#222">30</div>
<div class="t" style="left:677.0px;top:784.5px;width:49.4px;overflow:hidden;text-align:left;font-size:12.7px;-webkit-text-stroke:0.3px #222;color:#222">O</div>
<div class="t" style="left:730.4px;top:784.5px;width:48.1px;overflow:hidden;text-align:left;font-size:12.7px;-webkit-text-stroke:0.3px #222;color:#222">BRO00</div>
<div class="t" style="left:782.5px;top:784.5px;width:50.4px;overflow:hidden;text-align:right;font-size:12.7px;-webkit-text-stroke:0.3px #222;color:#222">153</div>
<div class="t" style="left:836.9px;top:784.5px;width:57.5px;overflow:hidden;text-align:left;font-size:12.7px;-webkit-text-stroke:0.3px #222;color:#222">Completed</div>
<div class="t" style="left:898.4px;top:784.5px;width:62.9px;overflow:hidden;text-align:left;font-size:12.7px;-webkit-text-stroke:0.3px #222;color:#222">2/6/2019 7</div>
<div class="a" style="left:283px;top:801.5px;width:11px;height:19px;background:#c4c4c4"></div>
<div class="a" style="left:295px;top:801.5px;width:668px;height:19px;background:#ccccff"></div>
<div class="t" style="left:335.3px;top:804.5px;width:70.7px;overflow:hidden;text-align:left;font-size:12.7px;-webkit-text-stroke:0.3px #222;color:#222">2/6/2019</div>
<div class="t" style="left:410.0px;top:804.5px;width:79.5px;overflow:hidden;text-align:left;font-size:12.7px;-webkit-text-stroke:0.3px #222;color:#222">D2391</div>
<div class="t" style="left:493.5px;top:804.5px;width:132.8px;overflow:hidden;text-align:left;font-size:12.7px;-webkit-text-stroke:0.3px #222;color:#222">resin-based composite - one</div>
<div class="t" style="left:630.3px;top:804.5px;width:42.7px;overflow:hidden;text-align:left;font-size:12.7px;-webkit-text-stroke:0.3px #222;color:#222">30</div>
<div class="t" style="left:677.0px;top:804.5px;width:49.4px;overflow:hidden;text-align:left;font-size:12.7px;-webkit-text-stroke:0.3px #222;color:#222">O</div>
<div class="t" style="left:730.4px;top:804.5px;width:48.1px;overflow:hidden;text-align:left;font-size:12.7px;-webkit-text-stroke:0.3px #222;color:#222">BRO00</div>
<div class="t" style="left:782.5px;top:804.5px;width:50.4px;overflow:hidden;text-align:right;font-size:12.7px;-webkit-text-stroke:0.3px #222;color:#222">153</div>
<div class="t" style="left:836.9px;top:804.5px;width:57.5px;overflow:hidden;text-align:left;font-size:12.7px;-webkit-text-stroke:0.3px #222;color:#222">Completed</div>
<div class="t" style="left:898.4px;top:804.5px;width:62.9px;overflow:hidden;text-align:left;font-size:12.7px;-webkit-text-stroke:0.3px #222;color:#222">2/6/2019 7</div>
<div class="a" style="left:283px;top:821.5px;width:11px;height:19px;background:#c4c4c4"></div>
<div class="a" style="left:295px;top:821.5px;width:668px;height:19px;background:#ccccff"></div>
<div class="t" style="left:296.4px;top:824.5px;width:34.9px;overflow:hidden;text-align:right;font-size:12.7px;-webkit-text-stroke:0.3px #222;color:#222">1</div>
<div class="t" style="left:335.3px;top:824.5px;width:70.7px;overflow:hidden;text-align:left;font-size:12.7px;-webkit-text-stroke:0.3px #222;color:#222">3/6/2019</div>
<div class="t" style="left:410.0px;top:824.5px;width:79.5px;overflow:hidden;text-align:left;font-size:12.7px;-webkit-text-stroke:0.3px #222;color:#222">D2950</div>
<div class="t" style="left:493.5px;top:824.5px;width:132.8px;overflow:hidden;text-align:left;font-size:12.7px;-webkit-text-stroke:0.3px #222;color:#222">core buildup, including any</div>
<div class="t" style="left:630.3px;top:824.5px;width:42.7px;overflow:hidden;text-align:left;font-size:12.7px;-webkit-text-stroke:0.3px #222;color:#222">18</div>
<div class="t" style="left:730.4px;top:824.5px;width:48.1px;overflow:hidden;text-align:left;font-size:12.7px;-webkit-text-stroke:0.3px #222;color:#222">BRO00</div>
<div class="t" style="left:782.5px;top:824.5px;width:50.4px;overflow:hidden;text-align:right;font-size:12.7px;-webkit-text-stroke:0.3px #222;color:#222">225</div>
<div class="t" style="left:836.9px;top:824.5px;width:57.5px;overflow:hidden;text-align:left;font-size:12.7px;-webkit-text-stroke:0.3px #222;color:#222">Completed</div>
<div class="t" style="left:898.4px;top:824.5px;width:62.9px;overflow:hidden;text-align:left;font-size:12.7px;-webkit-text-stroke:0.3px #222;color:#222">2/1/2019 8</div>
<div class="a" style="left:283px;top:841.5px;width:11px;height:19px;background:#c4c4c4"></div>
<div class="a" style="left:295px;top:841.5px;width:668px;height:19px;background:#ccccff"></div>
<div class="t" style="left:296.4px;top:844.5px;width:34.9px;overflow:hidden;text-align:right;font-size:12.7px;-webkit-text-stroke:0.3px #222;color:#222">2</div>
<div class="t" style="left:335.3px;top:844.5px;width:70.7px;overflow:hidden;text-align:left;font-size:12.7px;-webkit-text-stroke:0.3px #222;color:#222">3/6/2019</div>
<div class="t" style="left:410.0px;top:844.5px;width:79.5px;overflow:hidden;text-align:left;font-size:12.7px;-webkit-text-stroke:0.3px #222;color:#222">D2750</div>
<div class="t" style="left:493.5px;top:844.5px;width:132.8px;overflow:hidden;text-align:left;font-size:12.7px;-webkit-text-stroke:0.3px #222;color:#222">crown - porcelain fused</div>
<div class="t" style="left:630.3px;top:844.5px;width:42.7px;overflow:hidden;text-align:left;font-size:12.7px;-webkit-text-stroke:0.3px #222;color:#222">18</div>
<div class="t" style="left:730.4px;top:844.5px;width:48.1px;overflow:hidden;text-align:left;font-size:12.7px;-webkit-text-stroke:0.3px #222;color:#222">BRO00</div>
<div class="t" style="left:782.5px;top:844.5px;width:50.4px;overflow:hidden;text-align:right;font-size:12.7px;-webkit-text-stroke:0.3px #222;color:#222">900</div>
<div class="t" style="left:836.9px;top:844.5px;width:57.5px;overflow:hidden;text-align:left;font-size:12.7px;-webkit-text-stroke:0.3px #222;color:#222">Completed</div>
<div class="t" style="left:898.4px;top:844.5px;width:62.9px;overflow:hidden;text-align:left;font-size:12.7px;-webkit-text-stroke:0.3px #222;color:#222">2/1/2019 8</div>
<div class="a" style="left:283px;top:861.5px;width:11px;height:19px;background:#c4c4c4"></div>
<div class="a" style="left:295px;top:861.5px;width:668px;height:19px;background:#00cccc"></div>
<div class="t" style="left:410.0px;top:864.5px;width:79.5px;overflow:hidden;text-align:left;font-size:12.7px;-webkit-text-stroke:0.3px #063030;color:#063030">D7210</div>
<div class="t" style="left:493.5px;top:864.5px;width:132.8px;overflow:hidden;text-align:left;font-size:12.7px;-webkit-text-stroke:0.3px #063030;color:#063030">extraction, erupted tooth</div>
<div class="t" style="left:630.3px;top:864.5px;width:42.7px;overflow:hidden;text-align:left;font-size:12.7px;-webkit-text-stroke:0.3px #063030;color:#063030">1</div>
<div class="t" style="left:730.4px;top:864.5px;width:48.1px;overflow:hidden;text-align:left;font-size:12.7px;-webkit-text-stroke:0.3px #063030;color:#063030">BRO00</div>
<div class="t" style="left:782.5px;top:864.5px;width:50.4px;overflow:hidden;text-align:right;font-size:12.7px;-webkit-text-stroke:0.3px #063030;color:#063030">0</div>
<div class="t" style="left:836.9px;top:864.5px;width:57.5px;overflow:hidden;text-align:left;font-size:12.7px;-webkit-text-stroke:0.3px #063030;color:#063030">Existing Rec</div>
<div class="t" style="left:898.4px;top:864.5px;width:62.9px;overflow:hidden;text-align:left;font-size:12.7px;-webkit-text-stroke:0.3px #063030;color:#063030">10/18/2018</div>
<div class="a" style="left:283px;top:881.5px;width:11px;height:19px;background:#c4c4c4"></div>
<div class="a" style="left:295px;top:881.5px;width:668px;height:19px;background:#00cccc"></div>
<div class="t" style="left:410.0px;top:884.5px;width:79.5px;overflow:hidden;text-align:left;font-size:12.7px;-webkit-text-stroke:0.3px #063030;color:#063030">D2750</div>
<div class="t" style="left:493.5px;top:884.5px;width:132.8px;overflow:hidden;text-align:left;font-size:12.7px;-webkit-text-stroke:0.3px #063030;color:#063030">crown - porcelain fused</div>
<div class="t" style="left:630.3px;top:884.5px;width:42.7px;overflow:hidden;text-align:left;font-size:12.7px;-webkit-text-stroke:0.3px #063030;color:#063030">4</div>
<div class="t" style="left:730.4px;top:884.5px;width:48.1px;overflow:hidden;text-align:left;font-size:12.7px;-webkit-text-stroke:0.3px #063030;color:#063030">BRO00</div>
<div class="t" style="left:782.5px;top:884.5px;width:50.4px;overflow:hidden;text-align:right;font-size:12.7px;-webkit-text-stroke:0.3px #063030;color:#063030">0</div>
<div class="t" style="left:836.9px;top:884.5px;width:57.5px;overflow:hidden;text-align:left;font-size:12.7px;-webkit-text-stroke:0.3px #063030;color:#063030">Existing Rec</div>
<div class="t" style="left:898.4px;top:884.5px;width:62.9px;overflow:hidden;text-align:left;font-size:12.7px;-webkit-text-stroke:0.3px #063030;color:#063030">10/19/2018</div>
<div class="a" style="left:283px;top:901.5px;width:11px;height:19px;background:#c4c4c4"></div>
<div class="a" style="left:295px;top:901.5px;width:668px;height:19px;background:#00cccc"></div>
<div class="t" style="left:410.0px;top:904.5px;width:79.5px;overflow:hidden;text-align:left;font-size:12.7px;-webkit-text-stroke:0.3px #063030;color:#063030">D2954</div>
<div class="t" style="left:493.5px;top:904.5px;width:132.8px;overflow:hidden;text-align:left;font-size:12.7px;-webkit-text-stroke:0.3px #063030;color:#063030">prefabricated post and core</div>
<div class="t" style="left:630.3px;top:904.5px;width:42.7px;overflow:hidden;text-align:left;font-size:12.7px;-webkit-text-stroke:0.3px #063030;color:#063030">4</div>
<div class="t" style="left:730.4px;top:904.5px;width:48.1px;overflow:hidden;text-align:left;font-size:12.7px;-webkit-text-stroke:0.3px #063030;color:#063030">BRO00</div>
<div class="t" style="left:782.5px;top:904.5px;width:50.4px;overflow:hidden;text-align:right;font-size:12.7px;-webkit-text-stroke:0.3px #063030;color:#063030">0</div>
<div class="t" style="left:836.9px;top:904.5px;width:57.5px;overflow:hidden;text-align:left;font-size:12.7px;-webkit-text-stroke:0.3px #063030;color:#063030">Existing Rec</div>
<div class="t" style="left:898.4px;top:904.5px;width:62.9px;overflow:hidden;text-align:left;font-size:12.7px;-webkit-text-stroke:0.3px #063030;color:#063030">10/19/2018</div>
<div class="a" style="left:283px;top:921.5px;width:11px;height:19px;background:#c4c4c4"></div>
<div class="a" style="left:295px;top:921.5px;width:668px;height:19px;background:#00cccc"></div>
<div class="t" style="left:410.0px;top:924.5px;width:79.5px;overflow:hidden;text-align:left;font-size:12.7px;-webkit-text-stroke:0.3px #063030;color:#063030">D2160</div>
<div class="t" style="left:493.5px;top:924.5px;width:132.8px;overflow:hidden;text-align:left;font-size:12.7px;-webkit-text-stroke:0.3px #063030;color:#063030">amalgam - three surfaces</div>
<div class="t" style="left:630.3px;top:924.5px;width:42.7px;overflow:hidden;text-align:left;font-size:12.7px;-webkit-text-stroke:0.3px #063030;color:#063030">7</div>
<div class="t" style="left:677.0px;top:924.5px;width:49.4px;overflow:hidden;text-align:left;font-size:12.7px;-webkit-text-stroke:0.3px #063030;color:#063030">MIFS</div>
<div class="t" style="left:730.4px;top:924.5px;width:48.1px;overflow:hidden;text-align:left;font-size:12.7px;-webkit-text-stroke:0.3px #063030;color:#063030">BRO00</div>
<div class="t" style="left:782.5px;top:924.5px;width:50.4px;overflow:hidden;text-align:right;font-size:12.7px;-webkit-text-stroke:0.3px #063030;color:#063030">0</div>
<div class="t" style="left:836.9px;top:924.5px;width:57.5px;overflow:hidden;text-align:left;font-size:12.7px;-webkit-text-stroke:0.3px #063030;color:#063030">Existing Rec</div>
<div class="t" style="left:898.4px;top:924.5px;width:62.9px;overflow:hidden;text-align:left;font-size:12.7px;-webkit-text-stroke:0.3px #063030;color:#063030">7/22/2020 1</div>
<div class="a" style="left:283px;top:941.5px;width:11px;height:19px;background:#c4c4c4"></div>
<div class="a" style="left:295px;top:941.5px;width:668px;height:19px;background:#00cccc"></div>
<div class="t" style="left:410.0px;top:944.5px;width:79.5px;overflow:hidden;text-align:left;font-size:12.7px;-webkit-text-stroke:0.3px #063030;color:#063030">D7210</div>
<div class="t" style="left:493.5px;top:944.5px;width:132.8px;overflow:hidden;text-align:left;font-size:12.7px;-webkit-text-stroke:0.3px #063030;color:#063030">extraction, erupted tooth</div>
<div class="t" style="left:630.3px;top:944.5px;width:42.7px;overflow:hidden;text-align:left;font-size:12.7px;-webkit-text-stroke:0.3px #063030;color:#063030">16</div>
<div class="t" style="left:730.4px;top:944.5px;width:48.1px;overflow:hidden;text-align:left;font-size:12.7px;-webkit-text-stroke:0.3px #063030;color:#063030">BRO00</div>
<div class="t" style="left:782.5px;top:944.5px;width:50.4px;overflow:hidden;text-align:right;font-size:12.7px;-webkit-text-stroke:0.3px #063030;color:#063030">0</div>
<div class="t" style="left:836.9px;top:944.5px;width:57.5px;overflow:hidden;text-align:left;font-size:12.7px;-webkit-text-stroke:0.3px #063030;color:#063030">Existing Rec</div>
<div class="t" style="left:898.4px;top:944.5px;width:62.9px;overflow:hidden;text-align:left;font-size:12.7px;-webkit-text-stroke:0.3px #063030;color:#063030">10/18/2018</div>
<div class="a" style="left:283px;top:961.5px;width:11px;height:19px;background:#c4c4c4"></div>
<div class="a" style="left:295px;top:961.5px;width:668px;height:19px;background:#00cccc"></div>
<div class="t" style="left:410.0px;top:964.5px;width:79.5px;overflow:hidden;text-align:left;font-size:12.7px;-webkit-text-stroke:0.3px #063030;color:#063030">D2161</div>
<div class="t" style="left:493.5px;top:964.5px;width:132.8px;overflow:hidden;text-align:left;font-size:12.7px;-webkit-text-stroke:0.3px #063030;color:#063030">amalgam - four or more</div>
<div class="t" style="left:630.3px;top:964.5px;width:42.7px;overflow:hidden;text-align:left;font-size:12.7px;-webkit-text-stroke:0.3px #063030;color:#063030">18</div>
<div class="t" style="left:677.0px;top:964.5px;width:49.4px;overflow:hidden;text-align:left;font-size:12.7px;-webkit-text-stroke:0.3px #063030;color:#063030">MODBL</div>
<div class="t" style="left:730.4px;top:964.5px;width:48.1px;overflow:hidden;text-align:left;font-size:12.7px;-webkit-text-stroke:0.3px #063030;color:#063030">BRO00</div>
<div class="t" style="left:782.5px;top:964.5px;width:50.4px;overflow:hidden;text-align:right;font-size:12.7px;-webkit-text-stroke:0.3px #063030;color:#063030">0</div>
<div class="t" style="left:836.9px;top:964.5px;width:57.5px;overflow:hidden;text-align:left;font-size:12.7px;-webkit-text-stroke:0.3px #063030;color:#063030">Existing Rec</div>
<div class="t" style="left:898.4px;top:964.5px;width:62.9px;overflow:hidden;text-align:left;font-size:12.7px;-webkit-text-stroke:0.3px #063030;color:#063030">10/18/2018</div>
<div class="a" style="left:332.3px;top:521.5px;width:1.5px;height:460px;background:#e6e6e6;opacity:0.7"></div>
<div class="a" style="left:407.0px;top:521.5px;width:1.5px;height:460px;background:#e6e6e6;opacity:0.7"></div>
<div class="a" style="left:490.5px;top:521.5px;width:1.5px;height:460px;background:#e6e6e6;opacity:0.7"></div>
<div class="a" style="left:627.3px;top:521.5px;width:1.5px;height:460px;background:#e6e6e6;opacity:0.7"></div>
<div class="a" style="left:674.0px;top:521.5px;width:1.5px;height:460px;background:#e6e6e6;opacity:0.7"></div>
<div class="a" style="left:727.4px;top:521.5px;width:1.5px;height:460px;background:#e6e6e6;opacity:0.7"></div>
<div class="a" style="left:779.5px;top:521.5px;width:1.5px;height:460px;background:#e6e6e6;opacity:0.7"></div>
<div class="a" style="left:833.9px;top:521.5px;width:1.5px;height:460px;background:#e6e6e6;opacity:0.7"></div>
<div class="a" style="left:895.4px;top:521.5px;width:1.5px;height:460px;background:#e6e6e6;opacity:0.7"></div>
<div class="a" style="left:962.3px;top:521.5px;width:1.5px;height:460px;background:#e6e6e6;opacity:0.7"></div>
<svg class="a" style="left:285px;top:525.5px" width="8" height="11"><path d="M1 0L7 5.5L1 11Z" fill="#111"/></svg>
<div class="a" style="left:963px;top:503px;width:19px;height:480px;background:#f0f0f0"></div>
<svg class="a" style="left:966px;top:506px" width="12" height="8"><path d="M1 7L6 2L11 7" stroke="#555" stroke-width="1.6" fill="none"/></svg>
<div class="a" style="left:966px;top:520px;width:13px;height:15px;background:#cdcdcd"></div>
<svg class="a" style="left:966px;top:975px" width="12" height="8"><path d="M1 1L6 6L11 1" stroke="#555" stroke-width="1.6" fill="none"/></svg>
<div class="a" style="left:283px;top:986px;width:680px;height:19px;background:#f0f0f0"></div>
<svg class="a" style="left:287px;top:990px" width="8" height="12"><path d="M7 1L2 6L7 11" stroke="#555" stroke-width="1.6" fill="none"/></svg>
<div class="a" style="left:297px;top:988px;width:20px;height:15px;background:#cdcdcd"></div>
<svg class="a" style="left:952px;top:990px" width="8" height="12"><path d="M1 1L6 6L1 11" stroke="#555" stroke-width="1.6" fill="none"/></svg>

<!-- right panel -->
<div class="a" style="left:986px;top:115px;width:934px;height:895px;background:#f0f0f0"></div>
<div class="a" style="left:983px;top:115px;width:3px;height:895px;background:#a0a0a0"></div>
<div class="a" style="left:988.7px;top:118px;width:63.6px;height:18px;background:#e4e4e4;border:1px solid #c8c8c8;"></div>
<div class="a" style="left:994.7px;top:129px;width:6px;height:2px;background:#b8b8b8"></div>
<div class="t" style="left:1005.7px;top:123px;font-size:11px;color:#222">Notes</div>
<div class="a" style="left:1055.6px;top:118px;width:97.9px;height:18px;background:#e4e4e4;border:1px solid #c8c8c8;"></div>
<div class="a" style="left:1061.6px;top:129px;width:6px;height:2px;background:#b8b8b8"></div>
<div class="t" style="left:1072.6px;top:123px;font-size:11px;color:#222">Clinical Notes</div>
<div class="a" style="left:1156.9px;top:118px;width:103.6px;height:20px;background:#f4f4f4;border:1px solid #c8c8c8;border-bottom:none;"></div>
<div class="a" style="left:1162.9px;top:129px;width:6px;height:2px;background:#b8b8b8"></div>
<div class="t" style="left:1173.9px;top:125px;font-size:11px;color:#222">X-Ray Images</div>
<div class="a" style="left:987px;top:137px;width:925px;height:870px;border:1px solid #b8b8b8;border-bottom:none"></div>
<div class="a" style="left:990px;top:142px;width:921px;height:26px;background:#a4c8ee;border-top:2px solid #7890a8;border-left:2px solid #506070;border-bottom:3px solid #5a5a5a;box-sizing:border-box"></div>
<div class="a" style="left:1185px;top:143px;width:16px;height:17px;background:#f4f4f4;border:1px solid #4a78b8;border-radius:3px"></div>
<svg class="a" style="left:1187px;top:145px" width="14" height="14" viewBox="0 0 14 14"><path d="M10.5 4.5A4.5 4.5 0 1 0 11.5 8" stroke="#222" stroke-width="1.6" fill="none"/><path d="M8 3L12 2L12 6Z" fill="#222"/></svg>
<div class="a" style="left:994px;top:167px;width:48px;height:22px;background:#f4f4f4;border:1px solid #c8c8c8;border-bottom:none"></div>
<div class="t" style="left:995px;top:174px;font-size:11px;color:#222">Dates</div>
<div class="a" style="left:1043px;top:166px;width:50px;height:20px;background:#ececec;border-top:1px solid #c8c8c8;border-right:1px solid #c8c8c8"></div>
<div class="a" style="left:1043px;top:186px;width:40px;height:1px;background:#a0a0a0"></div>
<div class="t" style="left:1048px;top:171px;font-size:11px;color:#222">Teeth</div>
<div class="a" style="left:995px;top:190px;width:205px;height:812px;background:#fff;border:1px solid #9a9a9a;box-sizing:border-box"></div>
<div class="a" style="left:1017px;top:206px;width:0;height:60px;border-left:1px dotted #a0a0a0"></div>
<div class="a" style="left:1035px;top:222px;width:0;height:25px;border-left:1px dotted #a0a0a0"></div>
<div class="a" style="left:1035px;top:282px;width:0;height:14px;border-left:1px dotted #a0a0a0"></div>
<div class="t" style="left:1033.2px;top:194.2px;font-size:11px;color:#222">All Images</div>
<div class="a" style="left:999.0px;top:195.2px;width:7px;height:7px;border:1px solid #b0b0b0;background:#fff"></div><div class="a" style="left:1001.0px;top:199.2px;width:5px;height:1px;background:#606060"></div>
<svg class="a" style="left:1014.8px;top:191.2px" width="14" height="15" viewBox="0 0 14 15"><rect x="1" y="5" width="9" height="9" fill="#555"/><rect x="4" y="1" width="9" height="9" fill="#333" stroke="#ddd"/></svg>
<div class="t" style="left:1052.3px;top:209.6px;font-size:11px;color:#222">2011</div>
<div class="a" style="left:1017.4px;top:210.6px;width:7px;height:7px;border:1px solid #b0b0b0;background:#fff"></div><div class="a" style="left:1019.4px;top:214.6px;width:5px;height:1px;background:#606060"></div>
<svg class="a" style="left:1031.8px;top:205.6px" width="17" height="16" viewBox="0 0 17 16"><rect x="1.5" y="1.5" width="9" height="8" rx="2" fill="#c8d0f0" stroke="#2030c8" stroke-width="2" transform="rotate(25 6 5)"/><rect x="6" y="6" width="10" height="9" rx="3" fill="#d8dcf4" stroke="#2030c8" stroke-width="2"/></svg>
<div class="t" style="left:1071.2px;top:225.8px;font-size:11px;color:#222">September</div>
<div class="a" style="left:1036.9px;top:226.8px;width:7px;height:7px;border:1px solid #b0b0b0;background:#fff"></div><div class="a" style="left:1038.9px;top:230.8px;width:5px;height:1px;background:#606060"></div>
<svg class="a" style="left:1051.3px;top:223.8px" width="15" height="13" viewBox="0 0 15 13"><rect x="1" y="1" width="13" height="11" fill="#b8bccc" stroke="#2838c8" stroke-width="2"/></svg>
<div class="t" style="left:1089.2px;top:242.2px;font-size:11px;color:#222">September 19</div>
<svg class="a" style="left:1069.8px;top:240.2px" width="14" height="14" viewBox="0 0 14 14"><rect x="1" y="1" width="12" height="12" fill="#2838c8"/><rect x="3" y="3" width="8" height="8" fill="#fff"/><text x="7" y="10.5" font-size="8" font-family="Liberation Sans" font-weight="bold" fill="#000" text-anchor="middle">1</text></svg>
<div class="a" style="left:1059.8px;top:235.2px;width:8px;height:11px;border-left:1px dotted #a0a0a0;border-bottom:1px dotted #a0a0a0"></div>
<div class="t" style="left:1052.3px;top:258.0px;font-size:11px;color:#222">2018</div>
<div class="a" style="left:1017.4px;top:259.0px;width:7px;height:7px;border:1px solid #b0b0b0;background:#fff"></div><div class="a" style="left:1019.4px;top:263.0px;width:5px;height:1px;background:#606060"></div>
<svg class="a" style="left:1031.8px;top:254.0px" width="17" height="16" viewBox="0 0 17 16"><rect x="1.5" y="1.5" width="9" height="8" rx="2" fill="#c8d0f0" stroke="#2030c8" stroke-width="2" transform="rotate(25 6 5)"/><rect x="6" y="6" width="10" height="9" rx="3" fill="#d8dcf4" stroke="#2030c8" stroke-width="2"/></svg>
<div class="t" style="left:1071.2px;top:273.6px;font-size:11px;color:#222">October</div>
<div class="a" style="left:1036.9px;top:274.6px;width:7px;height:7px;border:1px solid #b0b0b0;background:#fff"></div><div class="a" style="left:1038.9px;top:278.6px;width:5px;height:1px;background:#606060"></div>
<svg class="a" style="left:1051.3px;top:271.6px" width="15" height="13" viewBox="0 0 15 13"><rect x="1" y="1" width="13" height="11" fill="#b8bccc" stroke="#2838c8" stroke-width="2"/></svg>
<div class="t" style="left:1089.2px;top:290.0px;font-size:11px;color:#222">October 15</div>
<svg class="a" style="left:1069.8px;top:288.0px" width="14" height="14" viewBox="0 0 14 14"><rect x="1" y="1" width="12" height="12" fill="#2838c8"/><rect x="3" y="3" width="8" height="8" fill="#fff"/><text x="7" y="10.5" font-size="8" font-family="Liberation Sans" font-weight="bold" fill="#000" text-anchor="middle">1</text></svg>
<div class="a" style="left:1059.8px;top:283.0px;width:8px;height:11px;border-left:1px dotted #a0a0a0;border-bottom:1px dotted #a0a0a0"></div>
<!-- thumbs start -->
<div class="a" style="left:1212.7px;top:168.8px;width:120.2px;height:96.0px;background:#000;overflow:hidden"><svg width="120.2" height="96.0" viewBox="0 0 120 96" preserveAspectRatio="none"><use href="#xr00"/></svg></div>
<div class="a" style="left:1212.7px;top:265.8px;width:118.2px;height:20.0px;background:#ececec;border:1px solid #b4b4b4"></div>
<div class="a" style="left:1337.2px;top:168.8px;width:120.2px;height:96.0px;background:#000;overflow:hidden"><svg width="120.2" height="96.0" viewBox="0 0 120 96" preserveAspectRatio="none"><use href="#xr01"/></svg></div>
<div class="a" style="left:1337.2px;top:265.8px;width:118.2px;height:20.0px;background:#ececec;border:1px solid #b4b4b4"></div>
<div class="a" style="left:1461.6px;top:168.8px;width:120.2px;height:96.0px;background:#000;overflow:hidden"><svg width="120.2" height="96.0" viewBox="0 0 120 96" preserveAspectRatio="none"><use href="#xr02"/></svg></div>
<div class="a" style="left:1461.6px;top:265.8px;width:118.2px;height:20.0px;background:#ececec;border:1px solid #b4b4b4"></div>
<div class="a" style="left:1586.1px;top:168.8px;width:120.2px;height:96.0px;background:#000;overflow:hidden"><svg width="120.2" height="96.0" viewBox="0 0 120 96" preserveAspectRatio="none"><use href="#xr03"/></svg></div>
<div class="a" style="left:1586.1px;top:265.8px;width:118.2px;height:20.0px;background:#ececec;border:1px solid #b4b4b4"></div>
<div class="a" style="left:1212.7px;top:293.7px;width:120.2px;height:96.0px;background:#000;overflow:hidden"><svg width="120.2" height="96.0" viewBox="0 0 120 96" preserveAspectRatio="none"><use href="#xr10"/></svg></div>
<div class="a" style="left:1212.7px;top:390.7px;width:118.2px;height:20.0px;background:#ececec;border:1px solid #b4b4b4"></div>
<div class="a" style="left:1337.2px;top:293.7px;width:120.2px;height:96.0px;background:#000;overflow:hidden"><svg width="120.2" height="96.0" viewBox="0 0 120 96" preserveAspectRatio="none"><use href="#xr11"/></svg></div>
<div class="a" style="left:1337.2px;top:390.7px;width:118.2px;height:20.0px;background:#ececec;border:1px solid #b4b4b4"></div>
<div class="a" style="left:1461.6px;top:293.7px;width:120.2px;height:96.0px;background:#000;overflow:hidden"><svg width="120.2" height="96.0" viewBox="0 0 120 96" preserveAspectRatio="none"><use href="#xr12"/></svg></div>
<div class="a" style="left:1461.6px;top:390.7px;width:118.2px;height:20.0px;background:#ececec;border:1px solid #b4b4b4"></div>
<div class="a" style="left:1586.1px;top:293.7px;width:120.2px;height:96.0px;background:#000;overflow:hidden"><svg width="120.2" height="96.0" viewBox="0 0 120 96" preserveAspectRatio="none"><use href="#xr13"/></svg></div>
<div class="a" style="left:1586.1px;top:390.7px;width:118.2px;height:20.0px;background:#ececec;border:1px solid #b4b4b4"></div>
<div class="a" style="left:1212.7px;top:418.5px;width:120.2px;height:96.0px;background:#000;overflow:hidden"><svg width="120.2" height="96.0" viewBox="0 0 120 96" preserveAspectRatio="none"><use href="#xr20"/></svg></div>
<div class="a" style="left:1212.7px;top:515.5px;width:118.2px;height:20.0px;background:#ececec;border:1px solid #b4b4b4"></div>
<div class="a" style="left:1337.2px;top:418.5px;width:120.2px;height:96.0px;background:#000;overflow:hidden"><svg width="120.2" height="96.0" viewBox="0 0 120 96" preserveAspectRatio="none"><use href="#xr21"/></svg></div>
<div class="a" style="left:1337.2px;top:515.5px;width:118.2px;height:20.0px;background:#ececec;border:1px solid #b4b4b4"></div>
<div class="a" style="left:1461.6px;top:418.5px;width:120.2px;height:96.0px;background:#000;overflow:hidden"><svg width="120.2" height="96.0" viewBox="0 0 120 96" preserveAspectRatio="none"><use href="#xr22"/></svg></div>
<div class="a" style="left:1461.6px;top:515.5px;width:118.2px;height:20.0px;background:#ececec;border:1px solid #b4b4b4"></div>
<div class="a" style="left:1586.1px;top:418.5px;width:120.2px;height:96.0px;background:#000;overflow:hidden"><svg width="120.2" height="96.0" viewBox="0 0 120 96" preserveAspectRatio="none"><use href="#xr23"/></svg></div>
<div class="a" style="left:1586.1px;top:515.5px;width:118.2px;height:20.0px;background:#ececec;border:1px solid #b4b4b4"></div>
<div class="a" style="left:1212.7px;top:543.2px;width:120.2px;height:96.0px;background:#000;overflow:hidden"><svg width="120.2" height="96.0" viewBox="0 0 120 96" preserveAspectRatio="none"><use href="#xr30"/></svg></div>
<div class="a" style="left:1212.7px;top:640.2px;width:118.2px;height:20.0px;background:#ececec;border:1px solid #b4b4b4"></div>
<div class="a" style="left:1337.2px;top:543.2px;width:120.2px;height:96.0px;background:#000;overflow:hidden"><svg width="120.2" height="96.0" viewBox="0 0 120 96" preserveAspectRatio="none"><use href="#xr31"/></svg></div>
<div class="a" style="left:1337.2px;top:640.2px;width:118.2px;height:20.0px;background:#ececec;border:1px solid #b4b4b4"></div>
<div class="a" style="left:1461.6px;top:543.2px;width:120.2px;height:96.0px;background:#000;overflow:hidden"><svg width="120.2" height="96.0" viewBox="0 0 120 96" preserveAspectRatio="none"><use href="#xr32"/></svg></div>
<div class="a" style="left:1461.6px;top:640.2px;width:118.2px;height:20.0px;background:#ececec;border:1px solid #b4b4b4"></div>
<div class="a" style="left:1586.1px;top:543.2px;width:120.2px;height:96.0px;background:#000;overflow:hidden"><svg width="120.2" height="96.0" viewBox="0 0 120 96" preserveAspectRatio="none"><use href="#xr33"/></svg></div>
<div class="a" style="left:1586.1px;top:640.2px;width:118.2px;height:20.0px;background:#ececec;border:1px solid #b4b4b4"></div>
<div class="a" style="left:1212.7px;top:668.3px;width:120.2px;height:96.0px;background:#000;overflow:hidden"><svg width="120.2" height="96.0" viewBox="0 0 120 96" preserveAspectRatio="none"><use href="#xr40"/></svg></div>
<div class="a" style="left:1212.7px;top:765.3px;width:118.2px;height:20.0px;background:#ececec;border:1px solid #b4b4b4"></div>
<div class="a" style="left:1332.9px;top:166.8px;width:3px;height:125.1px;background:#d0d0d0"></div>
<div class="a" style="left:1457.4px;top:166.8px;width:3px;height:125.1px;background:#d0d0d0"></div>
<div class="a" style="left:1581.8px;top:166.8px;width:3px;height:125.1px;background:#d0d0d0"></div>
<div class="a" style="left:1706.3px;top:166.8px;width:3px;height:125.1px;background:#d0d0d0"></div>
<div class="a" style="left:1332.9px;top:291.7px;width:3px;height:125.1px;background:#d0d0d0"></div>
<div class="a" style="left:1457.4px;top:291.7px;width:3px;height:125.1px;background:#d0d0d0"></div>
<div class="a" style="left:1581.8px;top:291.7px;width:3px;height:125.1px;background:#d0d0d0"></div>
<div class="a" style="left:1706.3px;top:291.7px;width:3px;height:125.1px;background:#d0d0d0"></div>
<div class="a" style="left:1332.9px;top:416.5px;width:3px;height:125.1px;background:#d0d0d0"></div>
<div class="a" style="left:1457.4px;top:416.5px;width:3px;height:125.1px;background:#d0d0d0"></div>
<div class="a" style="left:1581.8px;top:416.5px;width:3px;height:125.1px;background:#d0d0d0"></div>
<div class="a" style="left:1706.3px;top:416.5px;width:3px;height:125.1px;background:#d0d0d0"></div>
<div class="a" style="left:1332.9px;top:541.2px;width:3px;height:125.1px;background:#d0d0d0"></div>
<div class="a" style="left:1457.4px;top:541.2px;width:3px;height:125.1px;background:#d0d0d0"></div>
<div class="a" style="left:1581.8px;top:541.2px;width:3px;height:125.1px;background:#d0d0d0"></div>
<div class="a" style="left:1706.3px;top:541.2px;width:3px;height:125.1px;background:#d0d0d0"></div>
<div class="a" style="left:1332.9px;top:666.3px;width:3px;height:125.1px;background:#d0d0d0"></div>
<div class="a" style="left:1209.9px;top:167.2px;width:2px;height:838.0px;background:#c4c4c4;border-right:1px solid #fafafa"></div>
<!-- thumbs end -->

<!-- dialog -->
<div class="a" style="left:1332.7px;top:551.0px;width:483.7px;height:370.5px;background:#f0f0f0;border:1px solid #b8b8b8;box-sizing:border-box;box-shadow:0 2px 14px 4px rgba(0,0,0,0.28)"></div>
<div class="a" style="left:1333.7px;top:552.0px;width:481.7px;height:58.3px;background:#fff"></div>
<div class="t" style="left:1342.4px;top:561.0px;font-size:11.8px;color:#111">View Image</div>
<div class="a" style="left:1795.3px;top:558.6px;width:18.5px;height:19.1px;background:#d24848"></div>
<svg class="a" style="left:1800.3px;top:563.6px" width="9" height="9"><path d="M1 1L8 8M8 1L1 8" stroke="#fff" stroke-width="1.6"/></svg>
<svg class="a" style="left:1344.6px;top:586.3px" width="20" height="19" viewBox="0 0 20 19"><path d="M17 17C17 9 12 6 6 7" stroke="#6a8ad8" stroke-width="3" fill="none"/><path d="M8 1L1 7L8 13Z" fill="#6a8ad8"/></svg>
<svg class="a" style="left:1369.2px;top:586.3px" width="20" height="19" viewBox="0 0 20 19"><path d="M3 17C3 9 8 6 14 7" stroke="#6a8ad8" stroke-width="3" fill="none"/><path d="M12 1L19 7L12 13Z" fill="#6a8ad8"/></svg>
<svg class="a" style="left:1394.1px;top:586.3px" width="18" height="19" viewBox="0 0 18 19"><rect x="1" y="1" width="16" height="17" fill="#e8e8e8" stroke="#111" stroke-width="2"/><path d="M5 4H13V9L11 15H10L9 10L8 15H7L5 9Z" fill="#222"/></svg>
<svg class="a" style="left:1415.4px;top:586.3px" width="18" height="19" viewBox="0 0 18 19"><rect x="1" y="1" width="16" height="17" fill="#e8e8e8" stroke="#111" stroke-width="2"/><path d="M5 4H13V9L11 15H10L9 10L8 15H7L5 9Z" fill="#222"/></svg>
<svg class="a" style="left:1438.8px;top:586.3px" width="18" height="19" viewBox="0 0 18 19"><rect x="1" y="1" width="16" height="17" fill="#111" stroke="#111" stroke-width="2"/><path d="M5 4H13V9L11 15H10L9 10L8 15H7L5 9Z" fill="#fff"/></svg>
<svg class="a" style="left:1465.7px;top:586.3px" width="17" height="19" viewBox="0 0 17 19"><path d="M6 1H11L12 8H5Z" fill="#9aa8c8"/><path d="M1 9H16V15H1Z" fill="#b0b8c8"/><rect x="1" y="15" width="15" height="3" fill="#7888a8"/></svg>
<div class="t" style="left:1502.8px;top:589.3px;font-size:11.2px;color:#111">Undo</div>
<div class="a" style="left:1392.4px;top:633.9px;width:364.1px;height:262.6px;background:#000"><svg width="364.1" height="262.6" viewBox="0 0 364 264" preserveAspectRatio="none"><use href="#xbig"/></svg></div>
<!-- status bar -->
<div class="a" style="left:0;top:1011px;width:1920px;height:31px;background:#012350"></div>
<div class="a" style="left:986px;top:1005px;width:934px;height:2px;background:#a8a8a8"></div>
<div class="a" style="left:986px;top:1007px;width:934px;height:4px;background:#e8e6e2"></div>
<div class="a" style="left:0;top:1039px;width:1920px;height:3px;background:#000814"></div>
<svg class="a" style="left:1546.3px;top:1017.4px" width="18" height="15" viewBox="0 0 18 15"><path d="M1 1H17V10H6L3 14V10H1Z" fill="none" stroke="#9aa8bc" stroke-width="1.5"/><path d="M5 4V7M9 4V7M13 4V7" stroke="#9aa8bc" stroke-width="1.3"/></svg>
<svg class="a" style="left:1573.3px;top:1014.4px" width="20" height="24" viewBox="0 0 20 24"><path d="M2 22V6C2 2 12 2 12 6V22" fill="none" stroke="#8aa0b8" stroke-width="1.8"/><rect x="3" y="9" width="16" height="14" rx="2" fill="#e80000"/><text x="11" y="20" font-family="Liberation Sans" font-weight="bold" font-size="10" fill="#fff" text-anchor="middle">29</text></svg>
<div class="t" style="left:1608.2px;top:1019.7px;font-size:12.7px;color:#e8ecf2">South Fork Family Dental</div>
<svg class="a" style="left:1778.9px;top:1022.0px" width="10" height="7"><path d="M1 6L5 1L9 6Z" fill="#e8ecf2"/></svg>
<div class="t" style="left:1803.1px;top:1020.7px;font-size:10.7px;color:#e8ecf2">ALICIA</div>
<div class="t" style="left:1858.5px;top:1020.7px;font-size:11.8px;color:#e8ecf2">7/23/2020</div>

</div></body></html>
